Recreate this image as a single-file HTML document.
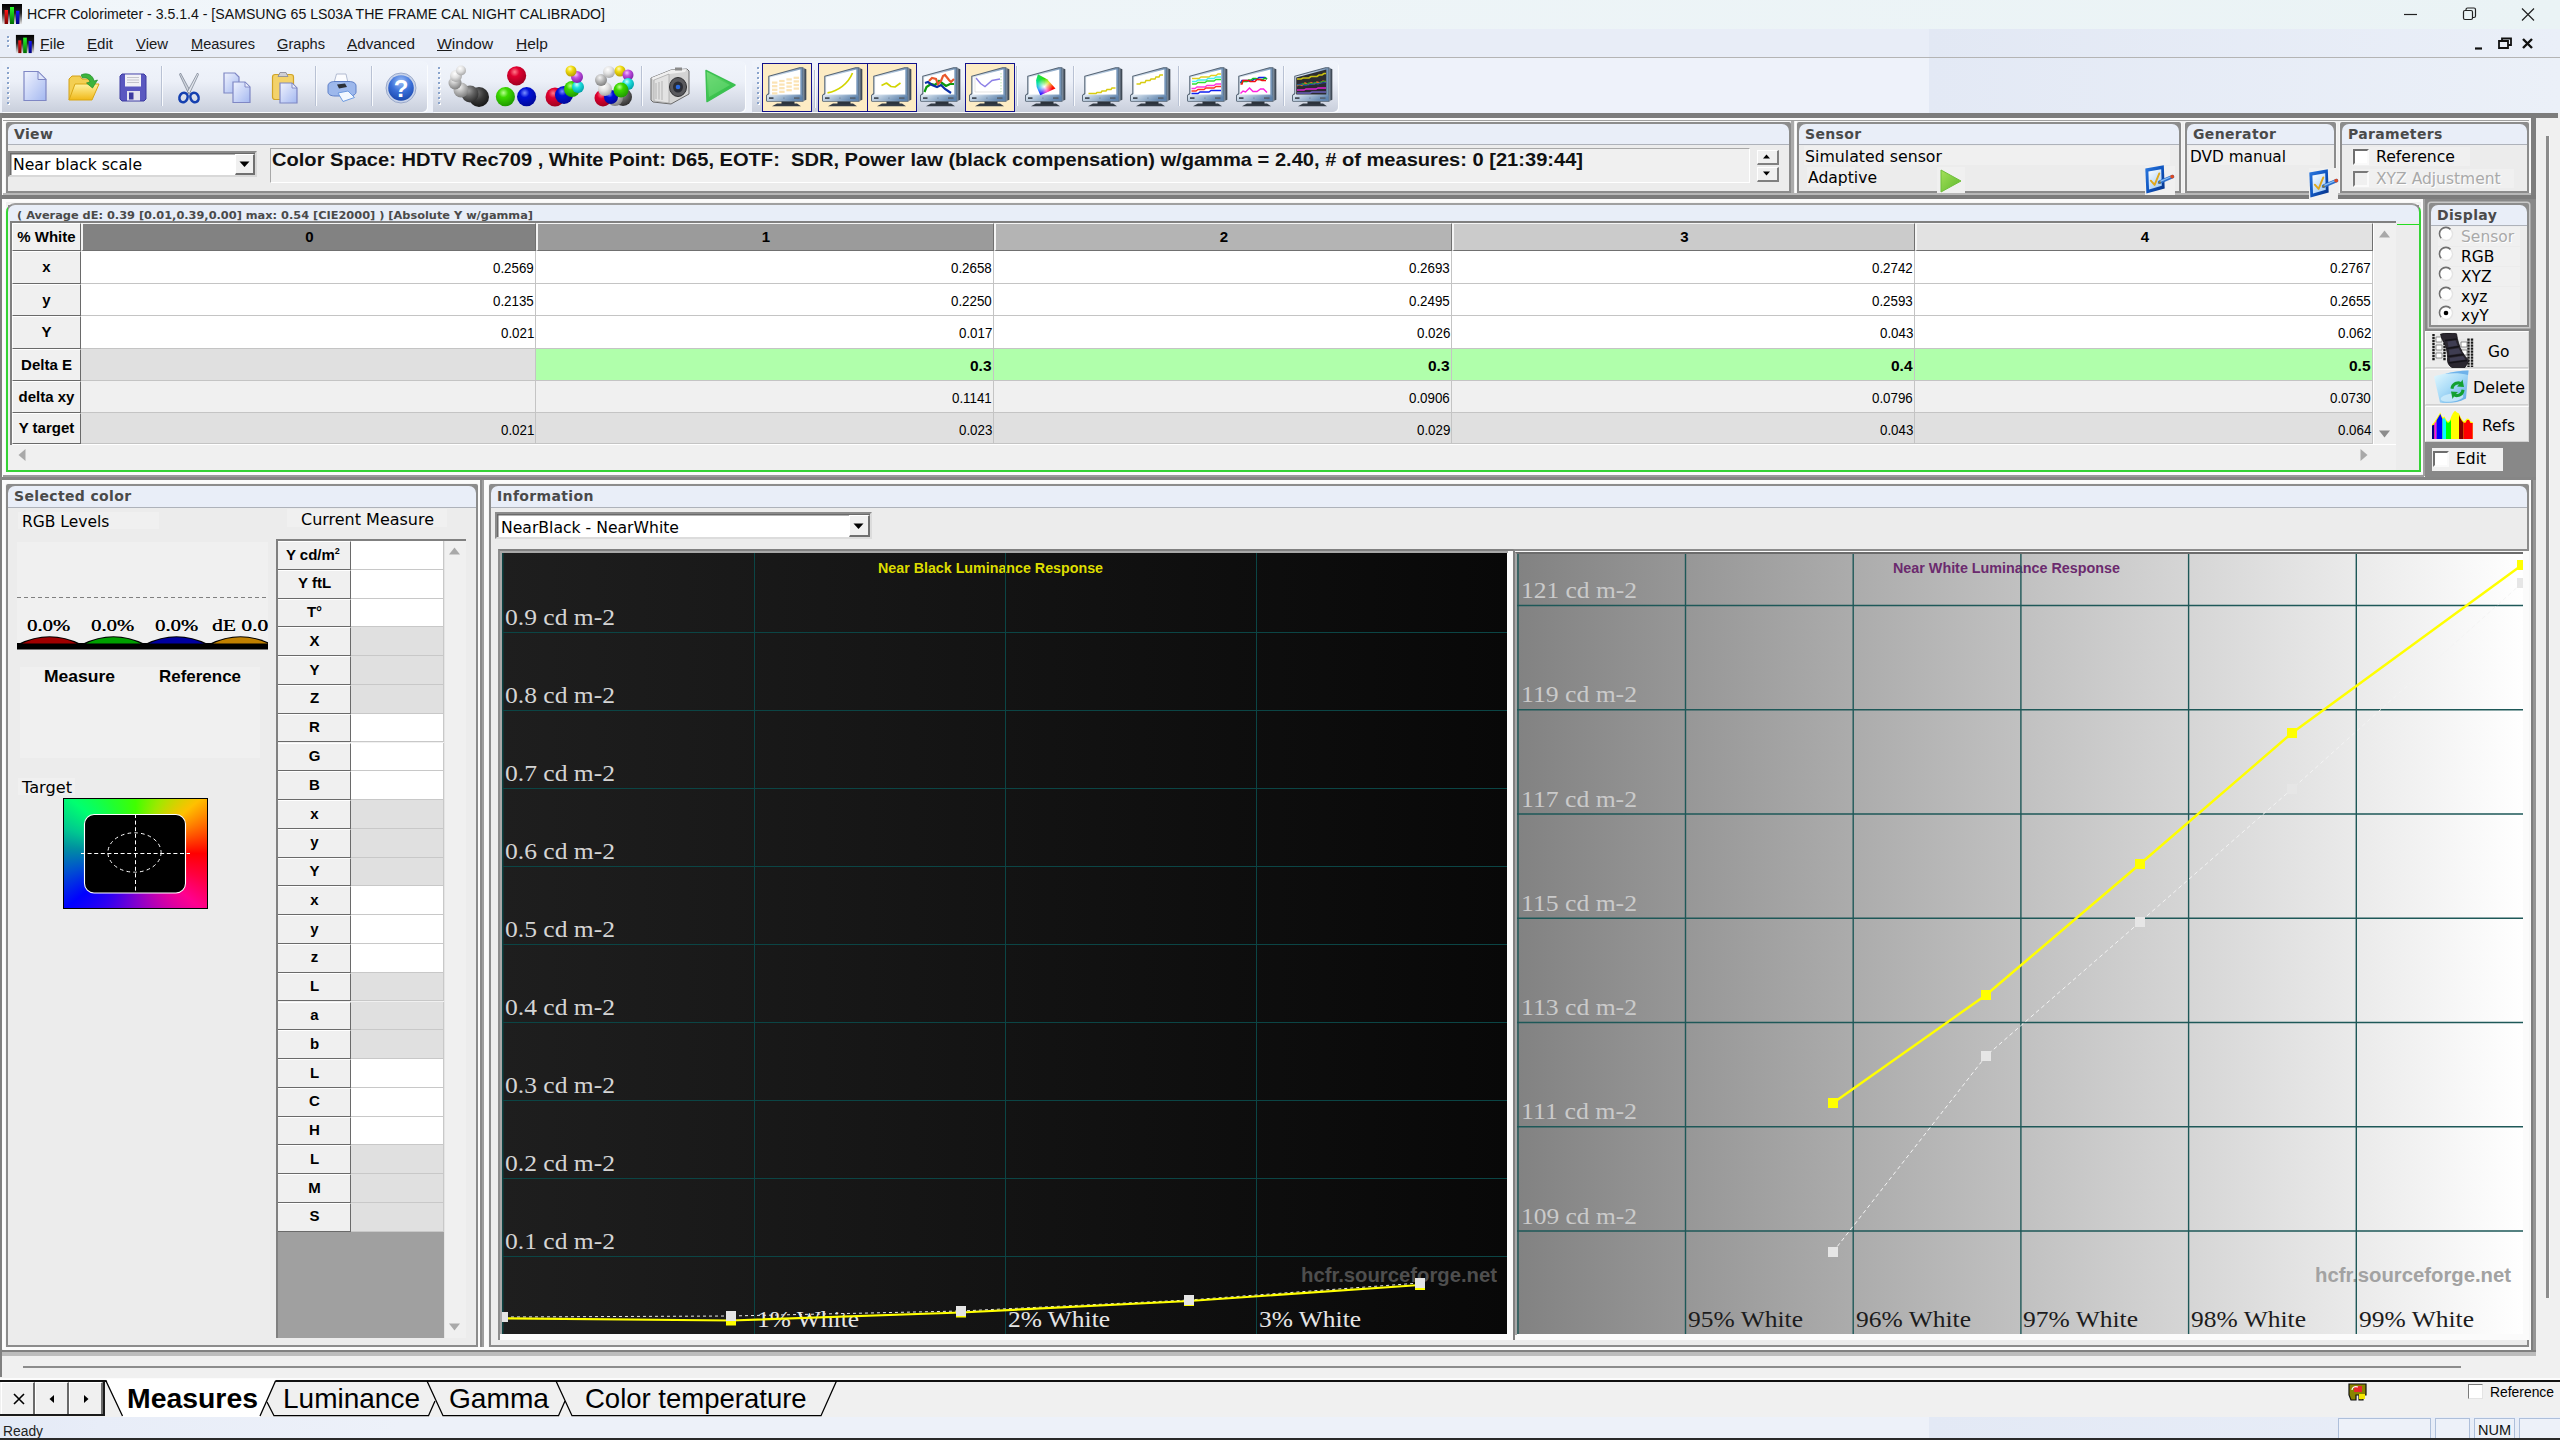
<!DOCTYPE html><html><head><meta charset="utf-8"><title>HCFR Colorimeter</title><style>*{box-sizing:border-box;margin:0;padding:0}
html,body{width:2560px;height:1440px;overflow:hidden;background:#f0f0f0;font-family:"Liberation Sans",sans-serif;}
.a{position:absolute}
.t{position:absolute;white-space:nowrap;line-height:1;color:#000}
.ui{font-family:"DejaVu Sans","Liberation Sans",sans-serif}
.seg{font-family:"Liberation Sans",sans-serif}
.cond{font-family:"DejaVu Sans Condensed","Liberation Sans",sans-serif}
.ser{font-family:"Liberation Serif",serif}
.mn::first-letter{text-decoration:underline}
.gb{position:absolute;border:2px solid #8c8c8c;border-radius:2px 2px 0 0;background:#f0f0f0;box-shadow:0 0 0 1px #f6f6f6}
.gb .cn{position:absolute;left:0;top:0;right:0;height:8px;background:#8c8c8c}
.gb .hd{position:absolute;left:0;top:0;right:0;height:21px;background:#e9eef8;border-bottom:1px solid #aeb2ba;border-radius:7px 7px 0 0}
.gb .hd span{position:absolute;left:6px;top:2px;font:bold 14px "DejaVu Sans",sans-serif;color:#4a4a4a;white-space:nowrap;line-height:17px;letter-spacing:0.35px}
</style></head><body>
<!-- sec_top -->
<div class="a" style="left:0px;top:0px;width:2560px;height:29px;background:linear-gradient(90deg,#f1f6fa,#eaf3f5)"></div>
<svg class="a" style="left:1px;top:3px" width="22" height="22" viewBox="0 0 22 22"><defs><linearGradient id="ig" x1="0" y1="0" x2="0" y2="1"><stop offset="0" stop-color="#000"/><stop offset="0.45" stop-color="#222"/><stop offset="1" stop-color="#e8e8e8"/></linearGradient><linearGradient id="igr" x1="0" y1="0" x2="0" y2="1"><stop offset="0" stop-color="#ff1818"/><stop offset="1" stop-color="#7a0000"/></linearGradient><linearGradient id="igg" x1="0" y1="0" x2="0" y2="1"><stop offset="0" stop-color="#28ff28"/><stop offset="1" stop-color="#006a00"/></linearGradient><linearGradient id="igb" x1="0" y1="0" x2="0" y2="1"><stop offset="0" stop-color="#1818ff"/><stop offset="1" stop-color="#00007a"/></linearGradient></defs><rect x="1" y="1" width="20" height="20" fill="url(#ig)"/><rect x="3.6" y="7" width="3.4" height="14" fill="url(#igr)"/><rect x="9" y="4" width="4" height="17" fill="url(#igg)"/><rect x="15" y="7.8" width="3.4" height="13.2" fill="url(#igb)"/></svg>
<div class="t" style="left:27.0px;top:6px;font-size:15.5px;font-family:'Liberation Sans',sans-serif;transform:scaleX(0.9109);transform-origin:0 0;color:#111">HCFR Colorimeter - 3.5.1.4 - [SAMSUNG 65 LS03A THE FRAME CAL NIGHT CALIBRADO]</div>
<svg class="a" style="left:2390px;top:0" width="170" height="29" viewBox="0 0 170 29"><g stroke="#222" stroke-width="1.2" fill="none"><path d="M14 14.5H27"/><rect x="73.5" y="10.5" width="9" height="9" rx="1.5"/><path d="M76 10.5V9.5a1.5 1.5 0 0 1 1.5-1.5H84a1.5 1.5 0 0 1 1.5 1.5V16a1.5 1.5 0 0 1-1.5 1.5H82.5"/><path d="M132 8.5L144 20.5M144 8.5L132 20.5"/></g></svg>
<div class="a" style="left:0px;top:29px;width:2560px;height:28px;background:#e8edf7"></div>
<div class="a" style="left:1929px;top:29px;width:631px;height:28px;background:linear-gradient(90deg,#e2e8f4,#eaeff8)"></div>
<div class="a" style="left:0px;top:57px;width:2560px;height:1px;background:#b4b4b4"></div>
<div class="a" style="left:7px;top:35.7px;width:2px;height:2px;background:#8aa4cc;box-shadow:1px 1px 0 #fff"></div>
<div class="a" style="left:7px;top:40.4px;width:2px;height:2px;background:#8aa4cc;box-shadow:1px 1px 0 #fff"></div>
<div class="a" style="left:7px;top:45.1px;width:2px;height:2px;background:#8aa4cc;box-shadow:1px 1px 0 #fff"></div>
<svg class="a" style="left:15px;top:34px" width="20" height="20" viewBox="0 0 22 22"><rect x="1" y="1" width="20" height="20" fill="url(#ig)"/><rect x="3.6" y="7" width="3.4" height="14" fill="url(#igr)"/><rect x="9" y="4" width="4" height="17" fill="url(#igg)"/><rect x="15" y="7.8" width="3.4" height="13.2" fill="url(#igb)"/></svg>
<div class="t mn" style="left:40.0px;top:36px;font-size:15.5px;font-family:'Liberation Sans',sans-serif;color:#1a1a1a">File</div>
<div class="t mn" style="left:87.0px;top:36px;font-size:15.5px;font-family:'Liberation Sans',sans-serif;transform:scaleX(0.9735);transform-origin:0 0;color:#1a1a1a">Edit</div>
<div class="t mn" style="left:136.0px;top:36px;font-size:15.5px;font-family:'Liberation Sans',sans-serif;transform:scaleX(0.9605);transform-origin:0 0;color:#1a1a1a">View</div>
<div class="t mn" style="left:191.0px;top:36px;font-size:15.5px;font-family:'Liberation Sans',sans-serif;transform:scaleX(0.9404);transform-origin:0 0;color:#1a1a1a">Measures</div>
<div class="t mn" style="left:277.0px;top:36px;font-size:15.5px;font-family:'Liberation Sans',sans-serif;transform:scaleX(0.9443);transform-origin:0 0;color:#1a1a1a">Graphs</div>
<div class="t mn" style="left:347.0px;top:36px;font-size:15.5px;font-family:'Liberation Sans',sans-serif;transform:scaleX(0.9864);transform-origin:0 0;color:#1a1a1a">Advanced</div>
<div class="t mn" style="left:437.0px;top:36px;font-size:15.5px;font-family:'Liberation Sans',sans-serif;transform:scaleX(1.0158);transform-origin:0 0;color:#1a1a1a">Window</div>
<div class="t mn" style="left:516.0px;top:36px;font-size:15.5px;font-family:'Liberation Sans',sans-serif;color:#1a1a1a">Help</div>
<svg class="a" style="left:2465px;top:33px" width="80" height="22" viewBox="0 0 80 22"><g stroke="#111" stroke-width="2.2" fill="none"><path d="M10 15.5H17"/><path d="M34 8H43V15H34zM37 8V5.5H46V12H43" stroke-width="1.8"/><path d="M58 6L67 15M67 6L58 15" stroke-width="2.4"/></g></svg>
<div class="a" style="left:0px;top:58px;width:2560px;height:55px;background:#eef2fa"></div>
<div class="a" style="left:1929px;top:58px;width:631px;height:55px;background:linear-gradient(90deg,#e3e9f5,#ebf0f8)"></div>
<!-- sec_toolbar -->
<svg class="a" width="0" height="0" style="left:0;top:0"><defs>
<linearGradient id="mb" x1="0" y1="0" x2="1" y2="0"><stop offset="0" stop-color="#e9f0f7"/><stop offset="0.55" stop-color="#b7cbe0"/><stop offset="1" stop-color="#6e8fb4"/></linearGradient>
<linearGradient id="mch" x1="0" y1="0" x2="1" y2="0.3"><stop offset="0" stop-color="#dfe8f1"/><stop offset="0.5" stop-color="#9fb7d0"/><stop offset="1" stop-color="#5e83ad"/></linearGradient>
<linearGradient id="ms" x1="0" y1="0" x2="1" y2="0"><stop offset="0" stop-color="#8494a6"/><stop offset="1" stop-color="#2b333d"/></linearGradient>
<linearGradient id="pgr" x1="0" y1="0" x2="1" y2="1"><stop offset="0" stop-color="#f0f3fe"/><stop offset="1" stop-color="#a4b8f0"/></linearGradient>
<linearGradient id="fol" x1="0" y1="0" x2="0" y2="1"><stop offset="0" stop-color="#fff3a0"/><stop offset="1" stop-color="#f0b818"/></linearGradient>
<radialGradient id="bR" cx="0.4" cy="0.3" r="0.7"><stop offset="0" stop-color="#ff7a8a"/><stop offset="0.35" stop-color="#e00030"/><stop offset="1" stop-color="#a00020"/></radialGradient>
<radialGradient id="bG" cx="0.4" cy="0.3" r="0.7"><stop offset="0" stop-color="#b8ff90"/><stop offset="0.35" stop-color="#3cd800"/><stop offset="1" stop-color="#1f9a00"/></radialGradient>
<radialGradient id="bB" cx="0.4" cy="0.3" r="0.7"><stop offset="0" stop-color="#7a90ff"/><stop offset="0.35" stop-color="#0010d8"/><stop offset="1" stop-color="#00089a"/></radialGradient>
<radialGradient id="bY" cx="0.4" cy="0.3" r="0.7"><stop offset="0" stop-color="#fffcc0"/><stop offset="0.4" stop-color="#f0dc10"/><stop offset="1" stop-color="#b8a000"/></radialGradient>
<radialGradient id="bM" cx="0.4" cy="0.3" r="0.7"><stop offset="0" stop-color="#f4c8ff"/><stop offset="0.4" stop-color="#c050e0"/><stop offset="1" stop-color="#8020a8"/></radialGradient>
<radialGradient id="bC" cx="0.4" cy="0.3" r="0.7"><stop offset="0" stop-color="#d0ffff"/><stop offset="0.4" stop-color="#20e0e0"/><stop offset="1" stop-color="#00a0a8"/></radialGradient>
<radialGradient id="bW" cx="0.4" cy="0.3" r="0.7"><stop offset="0" stop-color="#ffffff"/><stop offset="0.5" stop-color="#e0e0e0"/><stop offset="1" stop-color="#a8a8a8"/></radialGradient>
<radialGradient id="bL" cx="0.4" cy="0.3" r="0.7"><stop offset="0" stop-color="#f4f4f4"/><stop offset="0.5" stop-color="#b8b8b8"/><stop offset="1" stop-color="#808080"/></radialGradient>
<radialGradient id="bD" cx="0.4" cy="0.3" r="0.7"><stop offset="0" stop-color="#a0a0a0"/><stop offset="0.5" stop-color="#606060"/><stop offset="1" stop-color="#303030"/></radialGradient>
<radialGradient id="bK" cx="0.4" cy="0.3" r="0.7"><stop offset="0" stop-color="#707070"/><stop offset="0.5" stop-color="#383838"/><stop offset="1" stop-color="#181818"/></radialGradient>
<radialGradient id="hlp" cx="0.5" cy="0.25" r="0.8"><stop offset="0" stop-color="#9ec0f8"/><stop offset="0.5" stop-color="#3a6fd8"/><stop offset="1" stop-color="#1844a8"/></radialGradient>
<linearGradient id="play" x1="0" y1="0" x2="0.6" y2="1"><stop offset="0" stop-color="#7be07a"/><stop offset="1" stop-color="#22b83c"/></linearGradient>
<linearGradient id="gam" x1="0" y1="0" x2="0" y2="1"><stop offset="0" stop-color="#20e000"/><stop offset="0.5" stop-color="#30e8d8"/><stop offset="1" stop-color="#1010ff"/></linearGradient>
<linearGradient id="gam2" x1="0" y1="0" x2="1" y2="0"><stop offset="0" stop-color="#fff" stop-opacity="0"/><stop offset="0.45" stop-color="#fff" stop-opacity="0.85"/><stop offset="0.7" stop-color="#ff40a0" stop-opacity="0.9"/><stop offset="1" stop-color="#ff0000"/></linearGradient>
</defs></svg>
<div class="a" style="left:2px;top:61px;width:425px;height:51px;background:linear-gradient(#f0f4fb 0%,#ecf0f8 40%,#dadfea 72%,#c9cfdc 100%);border-radius:0 5px 5px 0;box-shadow:1px 1px 0 #fafcfe"></div>
<div class="a" style="left:7px;top:66.6px;width:2px;height:2px;background:#8aa4cc;box-shadow:1px 1px 0 #fff"></div>
<div class="a" style="left:7px;top:71.6px;width:2px;height:2px;background:#8aa4cc;box-shadow:1px 1px 0 #fff"></div>
<div class="a" style="left:7px;top:76.6px;width:2px;height:2px;background:#8aa4cc;box-shadow:1px 1px 0 #fff"></div>
<div class="a" style="left:7px;top:81.6px;width:2px;height:2px;background:#8aa4cc;box-shadow:1px 1px 0 #fff"></div>
<div class="a" style="left:7px;top:86.6px;width:2px;height:2px;background:#8aa4cc;box-shadow:1px 1px 0 #fff"></div>
<div class="a" style="left:7px;top:91.6px;width:2px;height:2px;background:#8aa4cc;box-shadow:1px 1px 0 #fff"></div>
<div class="a" style="left:7px;top:96.6px;width:2px;height:2px;background:#8aa4cc;box-shadow:1px 1px 0 #fff"></div>
<div class="a" style="left:7px;top:101.6px;width:2px;height:2px;background:#8aa4cc;box-shadow:1px 1px 0 #fff"></div>
<div class="a" style="left:433px;top:61px;width:312px;height:51px;background:linear-gradient(#f0f4fb 0%,#ecf0f8 40%,#dadfea 72%,#c9cfdc 100%);border-radius:0 5px 5px 0;box-shadow:1px 1px 0 #fafcfe"></div>
<div class="a" style="left:438px;top:66.6px;width:2px;height:2px;background:#8aa4cc;box-shadow:1px 1px 0 #fff"></div>
<div class="a" style="left:438px;top:71.6px;width:2px;height:2px;background:#8aa4cc;box-shadow:1px 1px 0 #fff"></div>
<div class="a" style="left:438px;top:76.6px;width:2px;height:2px;background:#8aa4cc;box-shadow:1px 1px 0 #fff"></div>
<div class="a" style="left:438px;top:81.6px;width:2px;height:2px;background:#8aa4cc;box-shadow:1px 1px 0 #fff"></div>
<div class="a" style="left:438px;top:86.6px;width:2px;height:2px;background:#8aa4cc;box-shadow:1px 1px 0 #fff"></div>
<div class="a" style="left:438px;top:91.6px;width:2px;height:2px;background:#8aa4cc;box-shadow:1px 1px 0 #fff"></div>
<div class="a" style="left:438px;top:96.6px;width:2px;height:2px;background:#8aa4cc;box-shadow:1px 1px 0 #fff"></div>
<div class="a" style="left:438px;top:101.6px;width:2px;height:2px;background:#8aa4cc;box-shadow:1px 1px 0 #fff"></div>
<div class="a" style="left:752px;top:61px;width:586px;height:51px;background:linear-gradient(#f0f4fb 0%,#ecf0f8 40%,#dadfea 72%,#c9cfdc 100%);border-radius:0 5px 5px 0;box-shadow:1px 1px 0 #fafcfe"></div>
<div class="a" style="left:757px;top:66.6px;width:2px;height:2px;background:#8aa4cc;box-shadow:1px 1px 0 #fff"></div>
<div class="a" style="left:757px;top:71.6px;width:2px;height:2px;background:#8aa4cc;box-shadow:1px 1px 0 #fff"></div>
<div class="a" style="left:757px;top:76.6px;width:2px;height:2px;background:#8aa4cc;box-shadow:1px 1px 0 #fff"></div>
<div class="a" style="left:757px;top:81.6px;width:2px;height:2px;background:#8aa4cc;box-shadow:1px 1px 0 #fff"></div>
<div class="a" style="left:757px;top:86.6px;width:2px;height:2px;background:#8aa4cc;box-shadow:1px 1px 0 #fff"></div>
<div class="a" style="left:757px;top:91.6px;width:2px;height:2px;background:#8aa4cc;box-shadow:1px 1px 0 #fff"></div>
<div class="a" style="left:757px;top:96.6px;width:2px;height:2px;background:#8aa4cc;box-shadow:1px 1px 0 #fff"></div>
<div class="a" style="left:757px;top:101.6px;width:2px;height:2px;background:#8aa4cc;box-shadow:1px 1px 0 #fff"></div>
<svg class="a" style="left:22px;top:70px" width="26" height="32" viewBox="0 0 26 32"><path d="M2 1.5H16L24 9.5V30.5H2Z" fill="url(#pgr)" stroke="#7f87c4" stroke-width="1.2"/><path d="M16 1.5V9.5H24Z" fill="#dfe6fa" stroke="#7f87c4" stroke-width="1"/></svg>
<svg class="a" style="left:67px;top:72px" width="34" height="30" viewBox="0 0 34 30"><path d="M2 28V7L5 4H13L15 7H25V12" fill="#f3cf52" stroke="#d2a018" stroke-width="1"/><path d="M2 28L8 12H32L25 28Z" fill="url(#fol)" stroke="#d9a614" stroke-width="1"/><path d="M14 3C20 0 26 3 27 9L30.5 8L25.5 16L19.5 11L23 10C22 6.5 19 5 15.5 6Z" fill="#3cb43c" stroke="#1e8c28" stroke-width="0.7"/></svg>
<svg class="a" style="left:119px;top:73px" width="28" height="29" viewBox="0 0 28 29"><path d="M1 3L3 1H25L27 3V26L25 28H3L1 26Z" fill="#5a58c0" stroke="#3c3aa0" stroke-width="1"/><rect x="6" y="1.5" width="16" height="12" fill="#f2f2f6"/><path d="M8 4.5H20M8 7H20M8 9.5H20" stroke="#c4c4cc" stroke-width="1"/><rect x="8" y="18" width="13" height="9.5" fill="#e4e4ee"/><rect x="10" y="19.5" width="4.5" height="7" fill="#3c3aa0"/></svg>
<div class="a" style="left:161px;top:66px;width:1px;height:40px;background:#b9c2d4"></div>
<div class="a" style="left:162px;top:66px;width:1px;height:40px;background:#f8fafd"></div>
<svg class="a" style="left:177px;top:72px" width="24" height="32" viewBox="0 0 24 32"><path d="M3.5 1L13.5 19.5L11.5 21.5L2.5 2.5Z" fill="#cfd4dc" stroke="#7d8796" stroke-width="0.8"/><path d="M20.5 1L10.5 19.5L12.5 21.5L21.5 2.5Z" fill="#e2e6ec" stroke="#7d8796" stroke-width="0.8"/><ellipse cx="6.5" cy="25.5" rx="4" ry="4.8" transform="rotate(25 6.5 25.5)" fill="none" stroke="#1540b0" stroke-width="2.6"/><ellipse cx="17.5" cy="25.5" rx="4" ry="4.8" transform="rotate(-25 17.5 25.5)" fill="none" stroke="#1540b0" stroke-width="2.6"/></svg>
<svg class="a" style="left:222px;top:71px" width="30" height="33" viewBox="0 0 30 33"><path d="M2 2H13L17 6V22H2Z" fill="url(#pgr)" stroke="#7f87c4" stroke-width="1.2"/><path d="M11 11H23L28 16V31.5H11Z" fill="url(#pgr)" stroke="#7f87c4" stroke-width="1.2"/><path d="M23 11V16H28Z" fill="#e6ebfa" stroke="#7f87c4" stroke-width="0.9"/></svg>
<svg class="a" style="left:271px;top:71px" width="28" height="33" viewBox="0 0 28 33"><rect x="1.5" y="3.5" width="21" height="25" rx="2.5" fill="#f3d26a" stroke="#d0a428" stroke-width="1.2"/><path d="M7 5.5L9 1.5H15L17 5.5Z" fill="#cfcfd4" stroke="#8e8e98" stroke-width="0.9"/><path d="M9 12H21L26 17V32H9Z" fill="url(#pgr)" stroke="#7f87c4" stroke-width="1.2"/><path d="M21 12V17H26Z" fill="#e6ebfa" stroke="#7f87c4" stroke-width="0.9"/></svg>
<div class="a" style="left:315px;top:66px;width:1px;height:40px;background:#b9c2d4"></div>
<div class="a" style="left:316px;top:66px;width:1px;height:40px;background:#f8fafd"></div>
<svg class="a" style="left:326px;top:72px" width="32" height="31" viewBox="0 0 32 31"><path d="M8 11L10.5 2H20L22 11Z" fill="#fbfcff" stroke="#aab4cc" stroke-width="0.9"/><path d="M2 14C2 11 5 9.5 9 9.5H23C27 9.5 30 11 30 14V20C30 22.5 27 24 23 24H9C5 24 2 22.5 2 20Z" fill="#9db8ec" stroke="#5f80c8" stroke-width="1"/><path d="M11 12.5L19 11.5L21 15L13 16.5Z" fill="#2c3038"/><path d="M12 21L22 19L28.5 25.5L17 29.5Z" fill="#f2f8ff" stroke="#6e9be0" stroke-width="1"/></svg>
<div class="a" style="left:371px;top:66px;width:1px;height:40px;background:#b9c2d4"></div>
<div class="a" style="left:372px;top:66px;width:1px;height:40px;background:#f8fafd"></div>
<svg class="a" style="left:385px;top:72px" width="32" height="32" viewBox="0 0 32 32"><circle cx="16" cy="16" r="15" fill="#c9d4ea" stroke="#8c9cc0" stroke-width="0.8"/><circle cx="16" cy="16" r="12.8" fill="url(#hlp)"/><text x="16" y="25" text-anchor="middle" font-family="Liberation Sans,sans-serif" font-weight="bold" font-size="24" fill="#fff">?</text></svg>
<svg class="a" style="left:446px;top:65px" width="44" height="44" viewBox="0 0 44 44"><circle cx="33" cy="32" r="10" fill="url(#bK)"/><circle cx="24" cy="29" r="8.5" fill="url(#bD)"/><circle cx="15" cy="25" r="7.5" fill="url(#bL)"/><circle cx="9" cy="18" r="6.5" fill="url(#bL)"/><circle cx="10" cy="11" r="6" fill="url(#bW)"/><circle cx="15" cy="5.5" r="5" fill="url(#bW)"/></svg>
<svg class="a" style="left:494px;top:65px" width="44" height="44" viewBox="0 0 44 44"><circle cx="22.6" cy="10.8" r="9.6" fill="url(#bR)"/><circle cx="11.4" cy="31.7" r="9.6" fill="url(#bG)"/><circle cx="32.6" cy="31.7" r="9.6" fill="url(#bB)"/></svg>
<svg class="a" style="left:544px;top:65px" width="44" height="44" viewBox="0 0 44 44"><circle cx="11" cy="32" r="9.5" fill="url(#bR)"/><circle cx="20" cy="30" r="9" fill="url(#bB)"/><circle cx="28" cy="24" r="8" fill="url(#bG)"/><circle cx="34" cy="22" r="6" fill="url(#bC)"/><circle cx="33" cy="12" r="6" fill="url(#bM)"/><circle cx="27" cy="6" r="5.5" fill="url(#bY)"/></svg>
<svg class="a" style="left:592px;top:65px" width="44" height="44" viewBox="0 0 44 44"><circle cx="31" cy="32" r="9" fill="url(#bD)"/><circle cx="23" cy="33" r="8" fill="url(#bL)"/><circle cx="11" cy="33" r="8.5" fill="url(#bR)"/><circle cx="19" cy="32" r="7" fill="url(#bB)"/><circle cx="13" cy="24" r="7" fill="url(#bW)"/><circle cx="9" cy="15" r="6" fill="url(#bL)"/><circle cx="17" cy="7" r="6" fill="url(#bW)"/><circle cx="28" cy="6" r="5.5" fill="url(#bY)"/><circle cx="36" cy="10" r="5.5" fill="url(#bM)"/><circle cx="36" cy="19" r="6" fill="url(#bC)"/><circle cx="29" cy="25" r="7.5" fill="url(#bG)"/></svg>
<div class="a" style="left:641px;top:66px;width:1px;height:40px;background:#b9c2d4"></div>
<div class="a" style="left:642px;top:66px;width:1px;height:40px;background:#f8fafd"></div>
<svg class="a" style="left:649px;top:66px" width="42" height="41" viewBox="0 0 42 41"><path d="M2 12L22 4L38 3L40 5V28L22 38L4 36L2 34Z" fill="#d4d4d4" stroke="#6a6a6a" stroke-width="1"/><path d="M2 12L22 4L38 3L36 6L20 8L5 14Z" fill="#f0f0f0"/><path d="M5 14L20 8V37L5 35Z" fill="#e2e2e2" stroke="#9a9a9a" stroke-width="0.6"/><path d="M7 17V33M10 16V33.5M13 15V34" stroke="#b4b4b4" stroke-width="1"/><rect x="26" y="1.5" width="7" height="3" fill="#8a8a8a"/><ellipse cx="29" cy="21" rx="8.5" ry="9.5" fill="#5a5a5e" stroke="#2e2e30" stroke-width="1"/><ellipse cx="29" cy="21" rx="5" ry="5.6" fill="#2a2c34"/><circle cx="29" cy="21" r="2.3" fill="#2a6ae0"/></svg>
<svg class="a" style="left:704px;top:69px" width="33" height="34" viewBox="0 0 33 34"><path d="M2 1.5L31 16L3 32.5Z" fill="url(#play)" stroke="#3cc052" stroke-width="1.5" stroke-linejoin="round"/><path d="M4 5L26 16L5 28Z" fill="#6ad876" opacity="0.6"/></svg>
<div class="a" style="left:762px;top:62.5px;width:49.5px;height:49px;background:#fdecc4;border:1.5px solid #12128c"></div>
<div class="a" style="left:818px;top:62.5px;width:49.5px;height:49px;background:#fdecc4;border:1.5px solid #12128c"></div>
<div class="a" style="left:866.5px;top:62.5px;width:50px;height:49px;background:#fdecc4;border:1.5px solid #12128c"></div>
<div class="a" style="left:964.5px;top:62.5px;width:50px;height:49px;background:#fdecc4;border:1.5px solid #12128c"></div>
<div class="a" style="left:814px;top:70px;width:1px;height:38px;background:#b9c2d4"></div>
<div class="a" style="left:815px;top:70px;width:1px;height:38px;background:#f8fafd"></div>
<div class="a" style="left:1016px;top:66px;width:1px;height:40px;background:#b9c2d4"></div>
<div class="a" style="left:1017px;top:66px;width:1px;height:40px;background:#f8fafd"></div>
<div class="a" style="left:1073px;top:66px;width:1px;height:40px;background:#b9c2d4"></div>
<div class="a" style="left:1074px;top:66px;width:1px;height:40px;background:#f8fafd"></div>
<div class="a" style="left:1178px;top:66px;width:1px;height:40px;background:#b9c2d4"></div>
<div class="a" style="left:1179px;top:66px;width:1px;height:40px;background:#f8fafd"></div>
<div class="a" style="left:1283px;top:66px;width:1px;height:40px;background:#b9c2d4"></div>
<div class="a" style="left:1284px;top:66px;width:1px;height:40px;background:#f8fafd"></div>
<svg class="a" style="left:766px;top:66.7px" width="41" height="40" viewBox="0 0 41 40"><path d="M6 39.3H35L31 36.6H11Z" fill="#353d47"/><path d="M15.5 34H28.5V37.3H15.5Z" fill="#2c343d"/><path d="M2.8 9.2L33.5 0.8L37 0.8V34.3H1.2L0.6 33.5V28.5L2.8 26.5Z" fill="url(#mb)" stroke="#566575" stroke-width="1.1" stroke-linejoin="round"/><path d="M37 0.8L40.3 2.3V32.8L37 34.3Z" fill="url(#ms)"/><path d="M1.2 28.3H36.5V33.8H1.2Z" fill="url(#mch)"/><path d="M4.2 10.6L34.3 2.6V27.6H4.2Z" fill="#fff"/><rect x="3" y="30.3" width="4.5" height="1.6" fill="#3a424c"/><rect x="28" y="30.3" width="5.5" height="1.6" fill="#56616e"/><rect x="17" y="30.6" width="1.8" height="1" fill="#7a8ea4"/><rect x="6.0" y="14.5" width="5.4" height="2.2" fill="#fbe3b4"/><rect x="13.2" y="12.9" width="5.4" height="2.2" fill="#fbe3b4"/><rect x="20.4" y="11.3" width="5.4" height="2.2" fill="#fbe3b4"/><rect x="27.6" y="9.7" width="5.4" height="2.2" fill="#fbe3b4"/><rect x="6.0" y="18.1" width="5.4" height="2.2" fill="#fbe3b4"/><rect x="13.2" y="16.5" width="5.4" height="2.2" fill="#fbe3b4"/><rect x="20.4" y="14.9" width="5.4" height="2.2" fill="#fbe3b4"/><rect x="27.6" y="13.3" width="5.4" height="2.2" fill="#fbe3b4"/><rect x="6.0" y="21.7" width="5.4" height="2.2" fill="#fbe3b4"/><rect x="13.2" y="20.1" width="5.4" height="2.2" fill="#fbe3b4"/><rect x="20.4" y="18.5" width="5.4" height="2.2" fill="#fbe3b4"/><rect x="27.6" y="16.9" width="5.4" height="2.2" fill="#fbe3b4"/><rect x="6.0" y="25.3" width="5.4" height="2.2" fill="#fbe3b4"/><rect x="13.2" y="23.7" width="5.4" height="2.2" fill="#fbe3b4"/><rect x="20.4" y="22.1" width="5.4" height="2.2" fill="#fbe3b4"/><rect x="27.6" y="20.5" width="5.4" height="2.2" fill="#fbe3b4"/></svg>
<svg class="a" style="left:822px;top:66.7px" width="41" height="40" viewBox="0 0 41 40"><path d="M6 39.3H35L31 36.6H11Z" fill="#353d47"/><path d="M15.5 34H28.5V37.3H15.5Z" fill="#2c343d"/><path d="M2.8 9.2L33.5 0.8L37 0.8V34.3H1.2L0.6 33.5V28.5L2.8 26.5Z" fill="url(#mb)" stroke="#566575" stroke-width="1.1" stroke-linejoin="round"/><path d="M37 0.8L40.3 2.3V32.8L37 34.3Z" fill="url(#ms)"/><path d="M1.2 28.3H36.5V33.8H1.2Z" fill="url(#mch)"/><path d="M4.2 10.6L34.3 2.6V27.6H4.2Z" fill="#fff"/><rect x="3" y="30.3" width="4.5" height="1.6" fill="#3a424c"/><rect x="28" y="30.3" width="5.5" height="1.6" fill="#56616e"/><rect x="17" y="30.6" width="1.8" height="1" fill="#7a8ea4"/><path d="M5.5 25.8C16 24 26 17 30.5 6" stroke="#d2d400" stroke-width="1.7" fill="none"/></svg>
<svg class="a" style="left:870.5px;top:66.7px" width="41" height="40" viewBox="0 0 41 40"><path d="M6 39.3H35L31 36.6H11Z" fill="#353d47"/><path d="M15.5 34H28.5V37.3H15.5Z" fill="#2c343d"/><path d="M2.8 9.2L33.5 0.8L37 0.8V34.3H1.2L0.6 33.5V28.5L2.8 26.5Z" fill="url(#mb)" stroke="#566575" stroke-width="1.1" stroke-linejoin="round"/><path d="M37 0.8L40.3 2.3V32.8L37 34.3Z" fill="url(#ms)"/><path d="M1.2 28.3H36.5V33.8H1.2Z" fill="url(#mch)"/><path d="M4.2 10.6L34.3 2.6V27.6H4.2Z" fill="#fff"/><rect x="3" y="30.3" width="4.5" height="1.6" fill="#3a424c"/><rect x="28" y="30.3" width="5.5" height="1.6" fill="#56616e"/><rect x="17" y="30.6" width="1.8" height="1" fill="#7a8ea4"/><path d="M10.5 18.5L15.5 16L20 19.5L24 20L29.5 16" stroke="#d2d400" stroke-width="1.6" fill="none" stroke-linejoin="round"/></svg>
<svg class="a" style="left:920px;top:66.7px" width="41" height="40" viewBox="0 0 41 40"><path d="M6 39.3H35L31 36.6H11Z" fill="#353d47"/><path d="M15.5 34H28.5V37.3H15.5Z" fill="#2c343d"/><path d="M2.8 9.2L33.5 0.8L37 0.8V34.3H1.2L0.6 33.5V28.5L2.8 26.5Z" fill="url(#mb)" stroke="#566575" stroke-width="1.1" stroke-linejoin="round"/><path d="M37 0.8L40.3 2.3V32.8L37 34.3Z" fill="url(#ms)"/><path d="M1.2 28.3H36.5V33.8H1.2Z" fill="url(#mch)"/><path d="M4.2 10.6L34.3 2.6V27.6H4.2Z" fill="#fff"/><rect x="3" y="30.3" width="4.5" height="1.6" fill="#3a424c"/><rect x="28" y="30.3" width="5.5" height="1.6" fill="#56616e"/><rect x="17" y="30.6" width="1.8" height="1" fill="#7a8ea4"/><path d="M4.5 25L6.5 20L11 17L15 18L19 14L22 16L26 19L30 17L34 17" stroke="#0c9a0c" stroke-width="2.2" fill="none"/><path d="M5 16L8 15L12 18L17 20L21 18L25 22L31 26" stroke="#0a2fa8" stroke-width="2.2" fill="none"/><path d="M9 14L12 11L16 12L18 17L21 14L23 9L25 8L29 13L31 15L34 12" stroke="#e8582c" stroke-width="2.2" fill="none"/></svg>
<svg class="a" style="left:968.5px;top:66.7px" width="41" height="40" viewBox="0 0 41 40"><path d="M6 39.3H35L31 36.6H11Z" fill="#353d47"/><path d="M15.5 34H28.5V37.3H15.5Z" fill="#2c343d"/><path d="M2.8 9.2L33.5 0.8L37 0.8V34.3H1.2L0.6 33.5V28.5L2.8 26.5Z" fill="url(#mb)" stroke="#566575" stroke-width="1.1" stroke-linejoin="round"/><path d="M37 0.8L40.3 2.3V32.8L37 34.3Z" fill="url(#ms)"/><path d="M1.2 28.3H36.5V33.8H1.2Z" fill="url(#mch)"/><path d="M4.2 10.6L34.3 2.6V27.6H4.2Z" fill="#fff"/><rect x="3" y="30.3" width="4.5" height="1.6" fill="#3a424c"/><rect x="28" y="30.3" width="5.5" height="1.6" fill="#56616e"/><rect x="17" y="30.6" width="1.8" height="1" fill="#7a8ea4"/><path d="M7 11L11.5 16.5L16 19.5L23 13.5L31 12" stroke="#8c7fe6" stroke-width="1.4" fill="none"/><path d="M6 9V25H32" stroke="#d8d8d8" stroke-width="0.7" fill="none"/><path d="M32 6V25" stroke="#a8e0a0" stroke-width="0.8" stroke-dasharray="1.5 1.5"/></svg>
<svg class="a" style="left:1025px;top:66.7px" width="41" height="40" viewBox="0 0 41 40"><path d="M6 39.3H35L31 36.6H11Z" fill="#353d47"/><path d="M15.5 34H28.5V37.3H15.5Z" fill="#2c343d"/><path d="M2.8 9.2L33.5 0.8L37 0.8V34.3H1.2L0.6 33.5V28.5L2.8 26.5Z" fill="url(#mb)" stroke="#566575" stroke-width="1.1" stroke-linejoin="round"/><path d="M37 0.8L40.3 2.3V32.8L37 34.3Z" fill="url(#ms)"/><path d="M1.2 28.3H36.5V33.8H1.2Z" fill="url(#mch)"/><path d="M4.2 10.6L34.3 2.6V27.6H4.2Z" fill="#fff"/><rect x="3" y="30.3" width="4.5" height="1.6" fill="#3a424c"/><rect x="28" y="30.3" width="5.5" height="1.6" fill="#56616e"/><rect x="17" y="30.6" width="1.8" height="1" fill="#7a8ea4"/></svg>
<div class="a" style="left:1035.5px;top:74.2px;width:20px;height:21.5px;clip-path:polygon(12% 0%,3% 28%,6% 60%,24% 98%,100% 66%,58% 24%);background:radial-gradient(circle at 42% 58%,#fff 0,rgba(255,255,255,0.6) 18%,rgba(255,255,255,0) 48%),conic-gradient(from 0deg at 42% 58%,#30e000 0deg,#d8e000 45deg,#ff3000 85deg,#ff0000 105deg,#ff00b0 150deg,#3000ff 200deg,#0090ff 250deg,#00e0a0 300deg,#30e000 360deg)"></div>
<svg class="a" style="left:1081.5px;top:66.7px" width="41" height="40" viewBox="0 0 41 40"><path d="M6 39.3H35L31 36.6H11Z" fill="#353d47"/><path d="M15.5 34H28.5V37.3H15.5Z" fill="#2c343d"/><path d="M2.8 9.2L33.5 0.8L37 0.8V34.3H1.2L0.6 33.5V28.5L2.8 26.5Z" fill="url(#mb)" stroke="#566575" stroke-width="1.1" stroke-linejoin="round"/><path d="M37 0.8L40.3 2.3V32.8L37 34.3Z" fill="url(#ms)"/><path d="M1.2 28.3H36.5V33.8H1.2Z" fill="url(#mch)"/><path d="M4.2 10.6L34.3 2.6V27.6H4.2Z" fill="#fff"/><rect x="3" y="30.3" width="4.5" height="1.6" fill="#3a424c"/><rect x="28" y="30.3" width="5.5" height="1.6" fill="#56616e"/><rect x="17" y="30.6" width="1.8" height="1" fill="#7a8ea4"/><path d="M6.5 26.5H14L15 25.5H19L20 24H24L25 22.5H29L30 21H33.5" stroke="#d8cc10" stroke-width="1.5" fill="none"/></svg>
<svg class="a" style="left:1130px;top:66.7px" width="41" height="40" viewBox="0 0 41 40"><path d="M6 39.3H35L31 36.6H11Z" fill="#353d47"/><path d="M15.5 34H28.5V37.3H15.5Z" fill="#2c343d"/><path d="M2.8 9.2L33.5 0.8L37 0.8V34.3H1.2L0.6 33.5V28.5L2.8 26.5Z" fill="url(#mb)" stroke="#566575" stroke-width="1.1" stroke-linejoin="round"/><path d="M37 0.8L40.3 2.3V32.8L37 34.3Z" fill="url(#ms)"/><path d="M1.2 28.3H36.5V33.8H1.2Z" fill="url(#mch)"/><path d="M4.2 10.6L34.3 2.6V27.6H4.2Z" fill="#fff"/><rect x="3" y="30.3" width="4.5" height="1.6" fill="#3a424c"/><rect x="28" y="30.3" width="5.5" height="1.6" fill="#56616e"/><rect x="17" y="30.6" width="1.8" height="1" fill="#7a8ea4"/><path d="M6.5 17H10L11 15.5H15L16 13.5H20L21 12H25L26 10H29L30 8H33" stroke="#d8cc10" stroke-width="1.5" fill="none"/></svg>
<svg class="a" style="left:1186.5px;top:66.7px" width="41" height="40" viewBox="0 0 41 40"><path d="M6 39.3H35L31 36.6H11Z" fill="#353d47"/><path d="M15.5 34H28.5V37.3H15.5Z" fill="#2c343d"/><path d="M2.8 9.2L33.5 0.8L37 0.8V34.3H1.2L0.6 33.5V28.5L2.8 26.5Z" fill="url(#mb)" stroke="#566575" stroke-width="1.1" stroke-linejoin="round"/><path d="M37 0.8L40.3 2.3V32.8L37 34.3Z" fill="url(#ms)"/><path d="M1.2 28.3H36.5V33.8H1.2Z" fill="url(#mch)"/><path d="M4.2 10.6L34.3 2.6V27.6H4.2Z" fill="#fff"/><rect x="3" y="30.3" width="4.5" height="1.6" fill="#3a424c"/><rect x="28" y="30.3" width="5.5" height="1.6" fill="#56616e"/><rect x="17" y="30.6" width="1.8" height="1" fill="#7a8ea4"/><path d="M5 11.5H12L14 10H22L24 8.5H29L31 7H34" stroke="#e0d020" stroke-width="1.3" fill="none"/><path d="M5 14.5H9L11 13H19L21 11.5H27L29 10H34" stroke="#40f0f0" stroke-width="1.3" fill="none"/><path d="M5 17H9L11 15.5H18L20 14H27L29 12.5H34" stroke="#30e030" stroke-width="1.3" fill="none"/><path d="M4.5 21.5H8L10 20H18L20 18.5H27L29 17H34" stroke="#ff30e0" stroke-width="1.3" fill="none"/><path d="M4.5 24H9L11 22.5H17L19 21H27L29 19.5H34" stroke="#ff3020" stroke-width="1.3" fill="none"/><path d="M4.5 26.5H11L13 25H22L24 23.5H34" stroke="#1020f0" stroke-width="1.3" fill="none"/></svg>
<svg class="a" style="left:1235.5px;top:66.7px" width="41" height="40" viewBox="0 0 41 40"><path d="M6 39.3H35L31 36.6H11Z" fill="#353d47"/><path d="M15.5 34H28.5V37.3H15.5Z" fill="#2c343d"/><path d="M2.8 9.2L33.5 0.8L37 0.8V34.3H1.2L0.6 33.5V28.5L2.8 26.5Z" fill="url(#mb)" stroke="#566575" stroke-width="1.1" stroke-linejoin="round"/><path d="M37 0.8L40.3 2.3V32.8L37 34.3Z" fill="url(#ms)"/><path d="M1.2 28.3H36.5V33.8H1.2Z" fill="url(#mch)"/><path d="M4.2 10.6L34.3 2.6V27.6H4.2Z" fill="#fff"/><rect x="3" y="30.3" width="4.5" height="1.6" fill="#3a424c"/><rect x="28" y="30.3" width="5.5" height="1.6" fill="#56616e"/><rect x="17" y="30.6" width="1.8" height="1" fill="#7a8ea4"/><path d="M4.5 16L6 13.5H11L12 14H16L18 12H21L23 10.5H29L31 12" stroke="#1020f0" stroke-width="1.5" fill="none"/><path d="M5 16.5L6.5 14.5H11L12.5 13H15L17 11.5H20L22 12.5H27L29 11L31 12" stroke="#10c020" stroke-width="1.5" fill="none"/><path d="M4.5 17H6L7 13.5H13L14 14.5H19L21 12.5H24L26 13.5H30" stroke="#f01010" stroke-width="1.5" fill="none"/><path d="M4.5 26.5L7 24L9.5 25L13.5 21L17 24.5H21L24.5 22H27.5L31 25.5" stroke="#ff20e0" stroke-width="1.4" fill="none"/></svg>
<svg class="a" style="left:1291.5px;top:66.7px" width="41" height="40" viewBox="0 0 41 40"><path d="M6 39.3H35L31 36.6H11Z" fill="#353d47"/><path d="M15.5 34H28.5V37.3H15.5Z" fill="#2c343d"/><path d="M2.8 9.2L33.5 0.8L37 0.8V34.3H1.2L0.6 33.5V28.5L2.8 26.5Z" fill="url(#mb)" stroke="#566575" stroke-width="1.1" stroke-linejoin="round"/><path d="M37 0.8L40.3 2.3V32.8L37 34.3Z" fill="url(#ms)"/><path d="M1.2 28.3H36.5V33.8H1.2Z" fill="url(#mch)"/><path d="M4.2 10.6L34.3 2.6V27.6H4.2Z" fill="#2c2c30"/><rect x="3" y="30.3" width="4.5" height="1.6" fill="#3a424c"/><rect x="28" y="30.3" width="5.5" height="1.6" fill="#56616e"/><rect x="17" y="30.6" width="1.8" height="1" fill="#7a8ea4"/><path d="M5 12H9L11 11H17L19 9.5H25L27 8H30L32 6.5H34" stroke="#c8c010" stroke-width="1.6" fill="none"/><path d="M5 19L7 17.5L10 18.5L13 16L16 17.5L19 15.5L22 17L25 15L28 16L31 14L34 15" stroke="#e06820" stroke-width="1.5" fill="none"/><path d="M5 17.5L8 18L11 16.5L14 18L17 16L20 17L23 15.5L26 17L29 15L34 14" stroke="#20a030" stroke-width="1.2" fill="none"/><path d="M5 18L9 17L12 18.5L34 15.5" stroke="#2040d0" stroke-width="0.8" fill="none"/><path d="M5 23H12L14 22H24L26 21H34" stroke="#e020d0" stroke-width="1.3" fill="none"/><path d="M5 26H18L20 25H34" stroke="#6860b8" stroke-width="1.4" fill="none"/></svg>
<!-- sec_main -->
<div class="a" style="left:0px;top:113px;width:2558px;height:5px;background:#7c7c7c"></div>
<div class="a" style="left:0px;top:118px;width:2536px;height:2px;background:#fbfbfb"></div>
<div class="a" style="left:0px;top:113px;width:2.2px;height:1264px;background:#808080"></div>
<div class="a" style="left:2.2px;top:119px;width:3.8px;height:1230px;background:#fdfdfd"></div>
<div class="a" style="left:2531px;top:118px;width:5px;height:362px;background:#7e7e7e"></div>
<div class="a" style="left:2531px;top:480px;width:5px;height:872px;background:linear-gradient(90deg,#7e7e7e 0 2px,#969696 2px 5px)"></div>
<div class="a" style="left:2529px;top:120px;width:2px;height:1229px;background:#fbfbfb"></div>
<div class="a" style="left:2546px;top:136px;width:2.6px;height:1162px;background:#8c8c8c;box-shadow:1px 0 0 #fafafa"></div>
<div class="a" style="left:3px;top:119.5px;width:2526px;height:1.5px;background:#a0a0a0"></div>
<div class="gb" style="left:6px;top:122px;width:1785px;height:71px;background:#ececec;"><div class="cn"></div><div class="hd" style="height:21px"><span>View</span></div></div>
<div class="a" style="left:1791px;top:121px;width:3px;height:73px;background:#ababab"></div>
<div class="a" style="left:8px;top:151px;width:249px;height:26px;background:#fff;border:2px solid #8a8a8a;border-right-color:#d8d8d8;border-bottom-color:#d8d8d8;box-shadow:inset 1.5px 1.5px 0 #6a6a6a"></div>
<div class="a" style="left:235px;top:154px;width:20px;height:21px;background:#f0f0f0;border:1px solid #fff;border-right:2px solid #707070;border-bottom:2px solid #707070"></div>
<svg class="a" style="left:239px;top:161px" width="11" height="7"><path d="M0.5 0.5H10.5L5.5 6Z" fill="#000"/></svg>
<div class="t" style="left:13.0px;top:158px;font-size:15px;font-family:'DejaVu Sans',sans-serif;transform:scaleX(1.0419);transform-origin:0 0;">Near black scale</div>
<div class="a" style="left:270px;top:148px;width:1480px;height:35px;background:#f0f0f0;border-top:1px solid #a8a8a8;border-left:1px solid #a8a8a8;border-right:1px solid #fff;border-bottom:1px solid #fff"></div>
<div class="t" style="left:272.0px;top:150px;font-size:19px;font-family:'Liberation Sans',sans-serif;font-weight:bold;transform:scaleX(1.0572);transform-origin:0 0;color:#111">Color Space: HDTV Rec709 , White Point: D65, EOTF:&nbsp; SDR, Power law (black compensation) w/gamma = 2.40, # of measures: 0 [21:39:44]</div>
<div class="a" style="left:1757px;top:150px;width:22px;height:15px;background:#f0f0f0;border:1px solid #fff;border-right:2px solid #808080;border-bottom:2px solid #808080"></div>
<svg class="a" style="left:1762px;top:154px" width="9" height="5"><path d="M1 4.5L4.5 0.5L8 4.5Z" fill="#000"/></svg>
<div class="a" style="left:1757px;top:167px;width:22px;height:15px;background:#f0f0f0;border:1px solid #fff;border-right:2px solid #808080;border-bottom:2px solid #808080"></div>
<svg class="a" style="left:1762px;top:171px" width="9" height="5"><path d="M1 0.5H8L4.5 4.5Z" fill="#000"/></svg>
<div class="a" style="left:1795px;top:121px;width:2px;height:74px;background:#fff"></div>
<div class="gb" style="left:1797px;top:122px;width:384px;height:71px;background:#ececec;"><div class="cn"></div><div class="hd" style="height:21px"><span>Sensor</span></div></div>
<div class="a" style="left:1804px;top:146px;width:366px;height:19px;background:#f0f0f0"></div>
<div class="t" style="left:1805.0px;top:150px;font-size:15.5px;font-family:'DejaVu Sans',sans-serif;transform:scaleX(1.0177);transform-origin:0 0;">Simulated sensor</div>
<div class="a" style="left:1807px;top:167px;width:48px;height:20px;background:#f0f0f0"></div>
<div class="t" style="left:1808.0px;top:171px;font-size:15.5px;font-family:'DejaVu Sans',sans-serif;transform:scaleX(1.0058);transform-origin:0 0;">Adaptive</div>
<div class="a" style="left:1937px;top:167px;width:28px;height:28.5px;background:#f0f0f0"></div>
<svg class="a" style="left:1940px;top:169px" width="22" height="24"><defs><linearGradient id="pg" x1="0" y1="0" x2="1" y2="1"><stop offset="0" stop-color="#a4e05a"/><stop offset="1" stop-color="#5cb82c"/></linearGradient></defs><path d="M1 1L21 12L1 23Z" fill="url(#pg)" stroke="#6fbf3a" stroke-width="1"/></svg>
<div class="gb" style="left:2185px;top:122px;width:151px;height:71px;background:#ececec;"><div class="cn"></div><div class="hd" style="height:21px"><span>Generator</span></div></div>
<div class="a" style="left:2189px;top:146px;width:131px;height:19px;background:#f0f0f0"></div>
<div class="t" style="left:2190.0px;top:150px;font-size:15.5px;font-family:'DejaVu Sans',sans-serif;transform:scaleX(0.9879);transform-origin:0 0;">DVD manual</div>
<div class="gb" style="left:2340px;top:122px;width:189px;height:71px;background:#ececec;"><div class="cn"></div><div class="hd" style="height:21px"><span>Parameters</span></div></div>
<div class="a" style="left:2352px;top:147px;width:118px;height:19px;background:#f0f0f0"></div>
<div class="t" style="left:2376.0px;top:150px;font-size:15.5px;font-family:'DejaVu Sans',sans-serif;transform:scaleX(1.0121);transform-origin:0 0;">Reference</div>
<div class="a" style="left:2352px;top:169px;width:162px;height:19px;background:#f0f0f0"></div>
<div class="t" style="left:2376.0px;top:172px;font-size:15.5px;font-family:'DejaVu Sans',sans-serif;color:#a9a9a9;text-shadow:1px 1px 0 #fff">XYZ Adjustment</div>
<div class="a" style="left:2353px;top:149px;width:15.5px;height:15.5px;background:#fff;border:2px solid #6e6e6e;border-right-color:#fafafa;border-bottom-color:#fafafa"></div>
<div class="a" style="left:2353px;top:171px;width:15.5px;height:15.5px;background:#f0f0f0;border:2px solid #7a7a7a;border-right-color:#fafafa;border-bottom-color:#fafafa"></div>
<div class="a" style="left:3px;top:193px;width:2528px;height:1.5px;background:#b8b8b8"></div>
<div class="a" style="left:0px;top:194.5px;width:2536px;height:4.5px;background:#7c7c7c"></div>
<div class="a" style="left:3px;top:199px;width:2420px;height:3px;background:#fbfbfb"></div>
<div class="a" style="left:2145px;top:166px;width:30px;height:29px;background:#f0f0f0"></div>
<svg class="a" style="left:2143px;top:164px" width="34" height="31" viewBox="0 0 34 31"><defs><linearGradient id="bc1" x1="0" y1="0" x2="1" y2="1"><stop offset="0" stop-color="#2f7be0"/><stop offset="0.5" stop-color="#0e55c0"/><stop offset="1" stop-color="#082f80"/></linearGradient><linearGradient id="bw1" x1="0" y1="0" x2="0.6" y2="1"><stop offset="0" stop-color="#ffffff"/><stop offset="1" stop-color="#a8d0f8"/></linearGradient></defs><path d="M2.3 4.4L20.8 1.3L21.7 24.4L3.4 29.4Z" fill="url(#bc1)"/><path d="M5.4 7.6L18.2 5.3L18.8 21.8L6 25.4Z" fill="url(#bw1)"/><path d="M7.8 16.7L11.6 20.9L16.3 9.4" stroke="#dfa71c" stroke-width="1.9" fill="none" stroke-linecap="round" stroke-linejoin="round"/><path d="M16.6 18.2L29.5 12.6" stroke="#2d6fcc" stroke-width="3.6" stroke-linecap="round"/><path d="M17.2 17.4L28.5 12.5" stroke="#8cc0f4" stroke-width="1.2" stroke-linecap="round"/><path d="M14.6 19.2L17.2 16.6L17.8 19.6Z" fill="#8a7a30"/><circle cx="29.2" cy="12.6" r="1.9" fill="#dc4a22"/></svg>
<div class="a" style="left:2309px;top:168px;width:29px;height:31.5px;background:#f0f0f0"></div>
<svg class="a" style="left:2307px;top:167.5px" width="34" height="31" viewBox="0 0 34 31"><defs><linearGradient id="bc2" x1="0" y1="0" x2="1" y2="1"><stop offset="0" stop-color="#2f7be0"/><stop offset="0.5" stop-color="#0e55c0"/><stop offset="1" stop-color="#082f80"/></linearGradient><linearGradient id="bw2" x1="0" y1="0" x2="0.6" y2="1"><stop offset="0" stop-color="#ffffff"/><stop offset="1" stop-color="#a8d0f8"/></linearGradient></defs><path d="M2.3 4.4L20.8 1.3L21.7 24.4L3.4 29.4Z" fill="url(#bc2)"/><path d="M5.4 7.6L18.2 5.3L18.8 21.8L6 25.4Z" fill="url(#bw2)"/><path d="M7.8 16.7L11.6 20.9L16.3 9.4" stroke="#dfa71c" stroke-width="1.9" fill="none" stroke-linecap="round" stroke-linejoin="round"/><path d="M16.6 18.2L29.5 12.6" stroke="#2d6fcc" stroke-width="3.6" stroke-linecap="round"/><path d="M17.2 17.4L28.5 12.5" stroke="#8cc0f4" stroke-width="1.2" stroke-linecap="round"/><path d="M14.6 19.2L17.2 16.6L17.8 19.6Z" fill="#8a7a30"/><circle cx="29.2" cy="12.6" r="1.9" fill="#dc4a22"/></svg>
<!-- sec_table -->
<div class="gb" style="left:6px;top:203px;width:2415px;height:269px;background:#f0f0f0;border-color:#a0a0a0 #35d335 #35d335 #35d335;border-radius:9px 9px 0 0"><div class="cn"></div><div class="hd" style="height:18px;border-bottom:none;background:#e8eef8"></div></div>
<div class="t" style="left:17.0px;top:210px;font-size:11px;font-family:'DejaVu Sans',sans-serif;font-weight:bold;transform:scaleX(1.0312);transform-origin:0 0;color:#4a4a4a">( Average dE: 0.39 [0.01,0.39,0.00] max: 0.54 [CIE2000] ) [Absolute Y w/gamma]</div>
<div class="a" style="left:10px;top:221px;width:2386px;height:224px;background:#fff;border-top:2px solid #808080;border-left:2px solid #808080"></div>
<div class="a" style="left:12px;top:223px;width:69px;height:28px;background:#f0f0f0;border-right:1.5px solid #6a6a6a;border-bottom:1.5px solid #6a6a6a;border-top:1px solid #fff;border-left:1px solid #fff"></div>
<div class="t" style="left:17.3px;top:229.0px;font-size:15px;font-family:'Liberation Sans',sans-serif;font-weight:bold;color:#000">% White</div>
<div class="a" style="left:12px;top:251px;width:69px;height:32.5px;background:#f0f0f0;border-right:1.5px solid #6a6a6a;border-bottom:1.5px solid #6a6a6a;border-top:1px solid #fff;border-left:1px solid #fff"></div>
<div class="t" style="left:42.3px;top:259.2px;font-size:15px;font-family:'Liberation Sans',sans-serif;font-weight:bold;color:#000">x</div>
<div class="a" style="left:12px;top:283.5px;width:69px;height:32.5px;background:#f0f0f0;border-right:1.5px solid #6a6a6a;border-bottom:1.5px solid #6a6a6a;border-top:1px solid #fff;border-left:1px solid #fff"></div>
<div class="t" style="left:42.3px;top:291.8px;font-size:15px;font-family:'Liberation Sans',sans-serif;font-weight:bold;color:#000">y</div>
<div class="a" style="left:12px;top:316px;width:69px;height:32.5px;background:#f0f0f0;border-right:1.5px solid #6a6a6a;border-bottom:1.5px solid #6a6a6a;border-top:1px solid #fff;border-left:1px solid #fff"></div>
<div class="t" style="left:41.5px;top:324.2px;font-size:15px;font-family:'Liberation Sans',sans-serif;font-weight:bold;color:#000">Y</div>
<div class="a" style="left:12px;top:348.5px;width:69px;height:32.5px;background:#f0f0f0;border-right:1.5px solid #6a6a6a;border-bottom:1.5px solid #6a6a6a;border-top:1px solid #fff;border-left:1px solid #fff"></div>
<div class="t" style="left:21.1px;top:356.8px;font-size:15px;font-family:'Liberation Sans',sans-serif;font-weight:bold;color:#000">Delta E</div>
<div class="a" style="left:12px;top:381px;width:69px;height:31.5px;background:#f0f0f0;border-right:1.5px solid #6a6a6a;border-bottom:1.5px solid #6a6a6a;border-top:1px solid #fff;border-left:1px solid #fff"></div>
<div class="t" style="left:18.6px;top:388.8px;font-size:15px;font-family:'Liberation Sans',sans-serif;font-weight:bold;color:#000">delta xy</div>
<div class="a" style="left:12px;top:412.5px;width:69px;height:31.0px;background:#f0f0f0;border-right:1.5px solid #6a6a6a;border-bottom:1.5px solid #6a6a6a;border-top:1px solid #fff;border-left:1px solid #fff"></div>
<div class="t" style="left:18.7px;top:420.0px;font-size:15px;font-family:'Liberation Sans',sans-serif;font-weight:bold;color:#000">Y target</div>
<div class="a" style="left:81px;top:223px;width:455px;height:28px;background:#828282;border-right:1.5px solid #707070;border-bottom:1.5px solid #707070;border-top:1px solid #f4f4f4;border-left:2px solid #f4f4f4"></div>
<div class="t" style="left:305.3px;top:229px;font-size:15px;font-family:'Liberation Sans',sans-serif;font-weight:bold;">0</div>
<div class="a" style="left:536px;top:223px;width:458px;height:28px;background:#9b9b9b;border-right:1.5px solid #707070;border-bottom:1.5px solid #707070;border-top:1px solid #f4f4f4;border-left:2px solid #f4f4f4"></div>
<div class="t" style="left:761.8px;top:229px;font-size:15px;font-family:'Liberation Sans',sans-serif;font-weight:bold;">1</div>
<div class="a" style="left:994px;top:223px;width:458px;height:28px;background:#b4b4b4;border-right:1.5px solid #707070;border-bottom:1.5px solid #707070;border-top:1px solid #f4f4f4;border-left:2px solid #f4f4f4"></div>
<div class="t" style="left:1219.8px;top:229px;font-size:15px;font-family:'Liberation Sans',sans-serif;font-weight:bold;">2</div>
<div class="a" style="left:1452px;top:223px;width:463px;height:28px;background:#cbcbcb;border-right:1.5px solid #707070;border-bottom:1.5px solid #707070;border-top:1px solid #f4f4f4;border-left:2px solid #f4f4f4"></div>
<div class="t" style="left:1680.3px;top:229px;font-size:15px;font-family:'Liberation Sans',sans-serif;font-weight:bold;">3</div>
<div class="a" style="left:1915px;top:223px;width:458px;height:28px;background:#e2e2e2;border-right:1.5px solid #707070;border-bottom:1.5px solid #707070;border-top:1px solid #f4f4f4;border-left:2px solid #f4f4f4"></div>
<div class="t" style="left:2140.8px;top:229px;font-size:15px;font-family:'Liberation Sans',sans-serif;font-weight:bold;">4</div>
<div class="a" style="left:81px;top:251px;width:455px;height:32.5px;background:#fff;border-right:1.5px solid #c4c4c4;border-bottom:1.5px solid #c4c4c4"></div>
<div class="t" style="left:493.4px;top:260px;font-size:15.5px;font-family:'Liberation Sans',sans-serif;transform:scaleX(0.8600);transform-origin:0 0;">0.2569</div>
<div class="a" style="left:536px;top:251px;width:458px;height:32.5px;background:#fff;border-right:1.5px solid #c4c4c4;border-bottom:1.5px solid #c4c4c4"></div>
<div class="t" style="left:951.4px;top:260px;font-size:15.5px;font-family:'Liberation Sans',sans-serif;transform:scaleX(0.8600);transform-origin:0 0;">0.2658</div>
<div class="a" style="left:994px;top:251px;width:458px;height:32.5px;background:#fff;border-right:1.5px solid #c4c4c4;border-bottom:1.5px solid #c4c4c4"></div>
<div class="t" style="left:1409.4px;top:260px;font-size:15.5px;font-family:'Liberation Sans',sans-serif;transform:scaleX(0.8600);transform-origin:0 0;">0.2693</div>
<div class="a" style="left:1452px;top:251px;width:463px;height:32.5px;background:#fff;border-right:1.5px solid #c4c4c4;border-bottom:1.5px solid #c4c4c4"></div>
<div class="t" style="left:1872.4px;top:260px;font-size:15.5px;font-family:'Liberation Sans',sans-serif;transform:scaleX(0.8600);transform-origin:0 0;">0.2742</div>
<div class="a" style="left:1915px;top:251px;width:458px;height:32.5px;background:#fff;border-right:1.5px solid #c4c4c4;border-bottom:1.5px solid #c4c4c4"></div>
<div class="t" style="left:2330.4px;top:260px;font-size:15.5px;font-family:'Liberation Sans',sans-serif;transform:scaleX(0.8600);transform-origin:0 0;">0.2767</div>
<div class="a" style="left:81px;top:283.5px;width:455px;height:32.5px;background:#fff;border-right:1.5px solid #c4c4c4;border-bottom:1.5px solid #c4c4c4"></div>
<div class="t" style="left:493.4px;top:292.5px;font-size:15.5px;font-family:'Liberation Sans',sans-serif;transform:scaleX(0.8600);transform-origin:0 0;">0.2135</div>
<div class="a" style="left:536px;top:283.5px;width:458px;height:32.5px;background:#fff;border-right:1.5px solid #c4c4c4;border-bottom:1.5px solid #c4c4c4"></div>
<div class="t" style="left:951.4px;top:292.5px;font-size:15.5px;font-family:'Liberation Sans',sans-serif;transform:scaleX(0.8600);transform-origin:0 0;">0.2250</div>
<div class="a" style="left:994px;top:283.5px;width:458px;height:32.5px;background:#fff;border-right:1.5px solid #c4c4c4;border-bottom:1.5px solid #c4c4c4"></div>
<div class="t" style="left:1409.4px;top:292.5px;font-size:15.5px;font-family:'Liberation Sans',sans-serif;transform:scaleX(0.8600);transform-origin:0 0;">0.2495</div>
<div class="a" style="left:1452px;top:283.5px;width:463px;height:32.5px;background:#fff;border-right:1.5px solid #c4c4c4;border-bottom:1.5px solid #c4c4c4"></div>
<div class="t" style="left:1872.4px;top:292.5px;font-size:15.5px;font-family:'Liberation Sans',sans-serif;transform:scaleX(0.8600);transform-origin:0 0;">0.2593</div>
<div class="a" style="left:1915px;top:283.5px;width:458px;height:32.5px;background:#fff;border-right:1.5px solid #c4c4c4;border-bottom:1.5px solid #c4c4c4"></div>
<div class="t" style="left:2330.4px;top:292.5px;font-size:15.5px;font-family:'Liberation Sans',sans-serif;transform:scaleX(0.8600);transform-origin:0 0;">0.2655</div>
<div class="a" style="left:81px;top:316px;width:455px;height:32.5px;background:#fff;border-right:1.5px solid #c4c4c4;border-bottom:1.5px solid #c4c4c4"></div>
<div class="t" style="left:500.8px;top:325px;font-size:15.5px;font-family:'Liberation Sans',sans-serif;transform:scaleX(0.8600);transform-origin:0 0;">0.021</div>
<div class="a" style="left:536px;top:316px;width:458px;height:32.5px;background:#fff;border-right:1.5px solid #c4c4c4;border-bottom:1.5px solid #c4c4c4"></div>
<div class="t" style="left:958.8px;top:325px;font-size:15.5px;font-family:'Liberation Sans',sans-serif;transform:scaleX(0.8600);transform-origin:0 0;">0.017</div>
<div class="a" style="left:994px;top:316px;width:458px;height:32.5px;background:#fff;border-right:1.5px solid #c4c4c4;border-bottom:1.5px solid #c4c4c4"></div>
<div class="t" style="left:1416.8px;top:325px;font-size:15.5px;font-family:'Liberation Sans',sans-serif;transform:scaleX(0.8600);transform-origin:0 0;">0.026</div>
<div class="a" style="left:1452px;top:316px;width:463px;height:32.5px;background:#fff;border-right:1.5px solid #c4c4c4;border-bottom:1.5px solid #c4c4c4"></div>
<div class="t" style="left:1879.8px;top:325px;font-size:15.5px;font-family:'Liberation Sans',sans-serif;transform:scaleX(0.8600);transform-origin:0 0;">0.043</div>
<div class="a" style="left:1915px;top:316px;width:458px;height:32.5px;background:#fff;border-right:1.5px solid #c4c4c4;border-bottom:1.5px solid #c4c4c4"></div>
<div class="t" style="left:2337.8px;top:325px;font-size:15.5px;font-family:'Liberation Sans',sans-serif;transform:scaleX(0.8600);transform-origin:0 0;">0.062</div>
<div class="a" style="left:81px;top:348.5px;width:455px;height:32.5px;background:#e0e0e0;border-right:1.5px solid #c4c4c4;border-bottom:1.5px solid #c4c4c4"></div>
<div class="a" style="left:536px;top:348.5px;width:458px;height:32.5px;background:#b0ffab;border-right:1.5px solid #c4c4c4;border-bottom:1.5px solid #c4c4c4"></div>
<div class="t" style="left:970.0px;top:357.5px;font-size:15.5px;font-family:'Liberation Sans',sans-serif;font-weight:bold;">0.3</div>
<div class="a" style="left:994px;top:348.5px;width:458px;height:32.5px;background:#b0ffab;border-right:1.5px solid #c4c4c4;border-bottom:1.5px solid #c4c4c4"></div>
<div class="t" style="left:1428.0px;top:357.5px;font-size:15.5px;font-family:'Liberation Sans',sans-serif;font-weight:bold;">0.3</div>
<div class="a" style="left:1452px;top:348.5px;width:463px;height:32.5px;background:#b0ffab;border-right:1.5px solid #c4c4c4;border-bottom:1.5px solid #c4c4c4"></div>
<div class="t" style="left:1891.0px;top:357.5px;font-size:15.5px;font-family:'Liberation Sans',sans-serif;font-weight:bold;">0.4</div>
<div class="a" style="left:1915px;top:348.5px;width:458px;height:32.5px;background:#b0ffab;border-right:1.5px solid #c4c4c4;border-bottom:1.5px solid #c4c4c4"></div>
<div class="t" style="left:2349.0px;top:357.5px;font-size:15.5px;font-family:'Liberation Sans',sans-serif;font-weight:bold;">0.5</div>
<div class="a" style="left:81px;top:381px;width:455px;height:31.5px;background:#f0f0f0;border-right:1.5px solid #c4c4c4;border-bottom:1.5px solid #c4c4c4"></div>
<div class="a" style="left:536px;top:381px;width:458px;height:31.5px;background:#f0f0f0;border-right:1.5px solid #c4c4c4;border-bottom:1.5px solid #c4c4c4"></div>
<div class="t" style="left:952.4px;top:390px;font-size:15.5px;font-family:'Liberation Sans',sans-serif;transform:scaleX(0.8600);transform-origin:0 0;">0.1141</div>
<div class="a" style="left:994px;top:381px;width:458px;height:31.5px;background:#f0f0f0;border-right:1.5px solid #c4c4c4;border-bottom:1.5px solid #c4c4c4"></div>
<div class="t" style="left:1409.4px;top:390px;font-size:15.5px;font-family:'Liberation Sans',sans-serif;transform:scaleX(0.8600);transform-origin:0 0;">0.0906</div>
<div class="a" style="left:1452px;top:381px;width:463px;height:31.5px;background:#f0f0f0;border-right:1.5px solid #c4c4c4;border-bottom:1.5px solid #c4c4c4"></div>
<div class="t" style="left:1872.4px;top:390px;font-size:15.5px;font-family:'Liberation Sans',sans-serif;transform:scaleX(0.8600);transform-origin:0 0;">0.0796</div>
<div class="a" style="left:1915px;top:381px;width:458px;height:31.5px;background:#f0f0f0;border-right:1.5px solid #c4c4c4;border-bottom:1.5px solid #c4c4c4"></div>
<div class="t" style="left:2330.4px;top:390px;font-size:15.5px;font-family:'Liberation Sans',sans-serif;transform:scaleX(0.8600);transform-origin:0 0;">0.0730</div>
<div class="a" style="left:81px;top:412.5px;width:455px;height:31.0px;background:#e0e0e0;border-right:1.5px solid #c4c4c4;border-bottom:1.5px solid #c4c4c4"></div>
<div class="t" style="left:500.8px;top:421.5px;font-size:15.5px;font-family:'Liberation Sans',sans-serif;transform:scaleX(0.8600);transform-origin:0 0;">0.021</div>
<div class="a" style="left:536px;top:412.5px;width:458px;height:31.0px;background:#e0e0e0;border-right:1.5px solid #c4c4c4;border-bottom:1.5px solid #c4c4c4"></div>
<div class="t" style="left:958.8px;top:421.5px;font-size:15.5px;font-family:'Liberation Sans',sans-serif;transform:scaleX(0.8600);transform-origin:0 0;">0.023</div>
<div class="a" style="left:994px;top:412.5px;width:458px;height:31.0px;background:#e0e0e0;border-right:1.5px solid #c4c4c4;border-bottom:1.5px solid #c4c4c4"></div>
<div class="t" style="left:1416.8px;top:421.5px;font-size:15.5px;font-family:'Liberation Sans',sans-serif;transform:scaleX(0.8600);transform-origin:0 0;">0.029</div>
<div class="a" style="left:1452px;top:412.5px;width:463px;height:31.0px;background:#e0e0e0;border-right:1.5px solid #c4c4c4;border-bottom:1.5px solid #c4c4c4"></div>
<div class="t" style="left:1879.8px;top:421.5px;font-size:15.5px;font-family:'Liberation Sans',sans-serif;transform:scaleX(0.8600);transform-origin:0 0;">0.043</div>
<div class="a" style="left:1915px;top:412.5px;width:458px;height:31.0px;background:#e0e0e0;border-right:1.5px solid #c4c4c4;border-bottom:1.5px solid #c4c4c4"></div>
<div class="t" style="left:2337.8px;top:421.5px;font-size:15.5px;font-family:'Liberation Sans',sans-serif;transform:scaleX(0.8600);transform-origin:0 0;">0.064</div>
<div class="a" style="left:2374px;top:223px;width:22px;height:221px;background:#f0f0f0"></div>
<div class="a" style="left:2396px;top:222px;width:23px;height:248px;background:#ececec"></div>
<div class="a" style="left:2397px;top:223.5px;width:22px;height:1.5px;background:#22dd22"></div>
<svg class="a" style="left:2379px;top:230px" width="11" height="8"><path d="M0 7.5L5.5 0.5L11 7.5Z" fill="#a9a9a9"/></svg>
<svg class="a" style="left:2379px;top:430px" width="11" height="8"><path d="M0 0.5L5.5 7.5L11 0.5Z" fill="#8c8c8c"/></svg>
<div class="a" style="left:12px;top:445px;width:2384px;height:22px;background:#f0f0f0"></div>
<svg class="a" style="left:18px;top:449px" width="8" height="12"><path d="M7.5 0L0.5 6L7.5 12Z" fill="#a9a9a9"/></svg>
<svg class="a" style="left:2360px;top:449px" width="8" height="12"><path d="M0.5 0L7.5 6L0.5 12Z" fill="#a9a9a9"/></svg>
<div class="a" style="left:2421px;top:199px;width:2px;height:275px;background:#fbfbfb"></div>
<div class="a" style="left:2423px;top:199px;width:2px;height:277px;background:#a0a0a0"></div>
<div class="a" style="left:2424.5px;top:199px;width:111.5px;height:281px;background:#888"></div>
<div class="gb" style="left:2429px;top:203px;width:100px;height:124px;background:#ececec;box-shadow:0 0 0 1.5px #c8c8c8"><div class="cn"></div><div class="hd" style="height:21px"><span>Display</span></div></div>
<div class="a" style="left:2438px;top:227px;width:82px;height:19px;background:#f0f0f0"></div>
<div class="t" style="left:2461.0px;top:230px;font-size:15.5px;font-family:'DejaVu Sans',sans-serif;color:#a9a9a9;text-shadow:1px 1px 0 #fff;">Sensor</div>
<svg class="a" style="left:2438px;top:226px" width="16" height="16"><circle cx="8" cy="8" r="6" fill="#fff"/><path d="M3.2 12.2A6.3 6.3 0 0 1 12.5 3.4" stroke="#707070" stroke-width="1.6" fill="none"/><path d="M12.8 3.8A6.3 6.3 0 0 1 3.6 12.6" stroke="#e4e4e4" stroke-width="1.4" fill="none"/></svg>
<div class="a" style="left:2438px;top:247px;width:82px;height:19px;background:#f0f0f0"></div>
<div class="t" style="left:2461.0px;top:250px;font-size:15.5px;font-family:'DejaVu Sans',sans-serif;color:#000;">RGB</div>
<svg class="a" style="left:2438px;top:246px" width="16" height="16"><circle cx="8" cy="8" r="6" fill="#fff"/><path d="M3.2 12.2A6.3 6.3 0 0 1 12.5 3.4" stroke="#707070" stroke-width="1.6" fill="none"/><path d="M12.8 3.8A6.3 6.3 0 0 1 3.6 12.6" stroke="#e4e4e4" stroke-width="1.4" fill="none"/></svg>
<div class="a" style="left:2438px;top:267px;width:82px;height:19px;background:#f0f0f0"></div>
<div class="t" style="left:2461.0px;top:270px;font-size:15.5px;font-family:'DejaVu Sans',sans-serif;color:#000;">XYZ</div>
<svg class="a" style="left:2438px;top:266px" width="16" height="16"><circle cx="8" cy="8" r="6" fill="#fff"/><path d="M3.2 12.2A6.3 6.3 0 0 1 12.5 3.4" stroke="#707070" stroke-width="1.6" fill="none"/><path d="M12.8 3.8A6.3 6.3 0 0 1 3.6 12.6" stroke="#e4e4e4" stroke-width="1.4" fill="none"/></svg>
<div class="a" style="left:2438px;top:287px;width:82px;height:19px;background:#f0f0f0"></div>
<div class="t" style="left:2461.0px;top:290px;font-size:15.5px;font-family:'DejaVu Sans',sans-serif;color:#000;">xyz</div>
<svg class="a" style="left:2438px;top:286px" width="16" height="16"><circle cx="8" cy="8" r="6" fill="#fff"/><path d="M3.2 12.2A6.3 6.3 0 0 1 12.5 3.4" stroke="#707070" stroke-width="1.6" fill="none"/><path d="M12.8 3.8A6.3 6.3 0 0 1 3.6 12.6" stroke="#e4e4e4" stroke-width="1.4" fill="none"/></svg>
<div class="a" style="left:2438px;top:306px;width:82px;height:19px;background:#f0f0f0"></div>
<div class="t" style="left:2461.0px;top:309px;font-size:15.5px;font-family:'DejaVu Sans',sans-serif;color:#000;">xyY</div>
<svg class="a" style="left:2438px;top:305px" width="16" height="16"><circle cx="8" cy="8" r="6" fill="#fff"/><path d="M3.2 12.2A6.3 6.3 0 0 1 12.5 3.4" stroke="#707070" stroke-width="1.6" fill="none"/><path d="M12.8 3.8A6.3 6.3 0 0 1 3.6 12.6" stroke="#e4e4e4" stroke-width="1.4" fill="none"/><circle cx="8" cy="8" r="2.3" fill="#000"/></svg>
<div class="a" style="left:2425px;top:330.5px;width:104px;height:111.5px;background:#dedede"></div>
<div class="a" style="left:2425px;top:330.5px;width:104px;height:37.0px;background:#ececec;border:1.5px solid #fdfdfd;border-right-color:#d8d8d8;border-bottom-color:#d0d0d0"></div>
<div class="a" style="left:2425px;top:368.5px;width:104px;height:36.0px;background:#ececec;border:1.5px solid #fdfdfd;border-right-color:#d8d8d8;border-bottom-color:#d0d0d0"></div>
<div class="a" style="left:2425px;top:405.5px;width:104px;height:36.5px;background:#ececec;border:1.5px solid #fdfdfd;border-right-color:#d8d8d8;border-bottom-color:#d0d0d0"></div>
<div class="t" style="left:2488.0px;top:345px;font-size:15.5px;font-family:'DejaVu Sans',sans-serif;">Go</div>
<div class="t" style="left:2473.0px;top:381px;font-size:15.5px;font-family:'DejaVu Sans',sans-serif;transform:scaleX(1.0211);transform-origin:0 0;">Delete</div>
<div class="t" style="left:2482.0px;top:419px;font-size:15.5px;font-family:'DejaVu Sans',sans-serif;">Refs</div>
<svg class="a" style="left:2432px;top:333px" width="42" height="35" viewBox="0 0 42 35"><rect x="0.5" y="1.5" width="13" height="26" fill="#e9e9e9"/><rect x="27" y="6" width="13.5" height="27.5" fill="#e9e9e9"/><path d="M1.5 1V28M12.5 1V28M36.5 5.5V34M40 5.5V34" stroke="#1a1a1a" stroke-width="2.4" stroke-dasharray="2.3 0.7"/><path d="M4 4H10V9H4ZM4 12H10V17H4ZM4 20H10V25H4ZM29 9H35V14H29ZM29 17H35V22H29ZM29 25H35V30H29Z" fill="#fff" stroke="#666" stroke-width="0.7"/><path d="M8.5 1.2C13 0 20 -0.3 24.5 0.8C25.5 7 27 13 30 18.5C32 22 35 26 37 27.5L33 34.5H20C17 33 15.5 30 15.5 27C16 20 14 12 10 6Z" fill="#2b2730" stroke="#151318" stroke-width="0.8"/><path d="M13 7.5L25 6M14.8 15.5L27.5 13.5M16 23.5L32 21.5M16.5 30L35 27.5" stroke="#15131a" stroke-width="1.6"/><path d="M15.5 8.5L23.5 7.5L25.5 12.5L16.5 14ZM17 16.8L26.5 15.2L29.5 20.3L17.5 22ZM17.8 25L31 23L33.5 26.5L18 28.5Z" fill="#3f3d52"/></svg>
<svg class="a" style="left:2433px;top:370px" width="37" height="34" viewBox="0 0 37 34"><defs><linearGradient id="bin" x1="0" y1="0" x2="0.9" y2="1"><stop offset="0" stop-color="#e8fbff"/><stop offset="0.5" stop-color="#aadcf8"/><stop offset="1" stop-color="#5fa8e4"/></linearGradient></defs><path d="M1 6.5C11 3 24 0.8 35.5 0.5L33 28.5C26 32.5 15 34 7 32.5Z" fill="url(#bin)"/><path d="M12 4C19 1.5 28 0.7 35.5 0.5L35 5C28 3 19 3 12 4Z" fill="#6fb2ea"/><ellipse cx="19" cy="27.5" rx="11.5" ry="4" transform="rotate(-8 19 27.5)" fill="#d6f0fc" opacity="0.75"/><path d="M17.5 18.5A7.5 7.5 0 0 1 28 12L29.5 9.5L31 17L24 16.5L26 14.5A4.8 4.8 0 0 0 20.5 19Z" fill="#13a031"/><path d="M31.5 20A7.5 7.5 0 0 1 21 26.5L19.5 29L18 21.5L25 22L23 24A4.8 4.8 0 0 0 28.5 19.5Z" fill="#13a031"/></svg>
<svg class="a" style="left:2432px;top:410px" width="42" height="30" viewBox="0 0 42 30"><path d="M0 29V14.5L2 12.5L3.5 10L5.5 7L7 4.5L8.3 2.5L9.5 5.5L11 7.5L12.5 6.5L14 9.5L16 11.5L18 10L19.5 6L21 3L23 0.8L25 2.5L27 3.5L28.5 7L30 9.5L32 11.5L33.5 10L35 8.5L37 9L38.5 11.5L40.7 12V29Z" fill="#ffff00"/><path d="M0 29V15.5L2.5 14.5V29Z" fill="#000080"/><path d="M2.5 29V13.5L4.5 11V29Z" fill="#ff00ff"/><path d="M4.5 29V10.5L6.5 7L8.3 4L9.5 7L10.5 9V29Z" fill="#0000ff"/><path d="M10.5 29V9L12.5 8L14 11V29Z" fill="#00ffff"/><path d="M14 29V11L16 13L18 11.5L19 9.5V29Z" fill="#00ff00"/><path d="M19 29V9L21 5L23 2.5L25 4L27 5V29Z" fill="#ffff00"/><path d="M27 29V5L28.5 8.5L30 11L31.5 12.5V29Z" fill="#800000"/><path d="M31.5 29V12.8H33.5L35 10H37L38.5 13H40.7V29Z" fill="#ff0000"/></svg>
<div class="a" style="left:2432px;top:448px;width:71px;height:23px;background:#f0f0f0"></div>
<div class="a" style="left:2433px;top:450.5px;width:15.5px;height:16px;background:#fff;border:2px solid #6e6e6e;border-right-color:#fafafa;border-bottom-color:#fafafa"></div>
<div class="t" style="left:2456.0px;top:452px;font-size:15.5px;font-family:'DejaVu Sans',sans-serif;">Edit</div>
<div class="a" style="left:3px;top:472px;width:2418px;height:2.5px;background:#fbfbfb"></div>
<div class="a" style="left:3px;top:474.5px;width:2421px;height:2.5px;background:#9c9c9c"></div>
<div class="a" style="left:0px;top:477px;width:2536px;height:3px;background:#868686"></div>
<div class="a" style="left:3px;top:480px;width:2528px;height:3.5px;background:#fbfbfb"></div>
<!-- sec_left -->
<div class="gb" style="left:6px;top:483.5px;width:472px;height:863.5px;background:#ececec"><div class="cn"></div><div class="hd" style="height:22px"><span>Selected color</span></div></div>
<div class="a" style="left:478px;top:480px;width:11px;height:870px;background:linear-gradient(90deg,#fbfbfb 0 2px,#8a8a8a 2px 4.5px,#9e9e9e 4.5px 6.5px,#fbfbfb 6.5px 11px)"></div>
<div class="a" style="left:18px;top:512px;width:141px;height:17px;background:#f0f0f0"></div>
<div class="t" style="left:22.0px;top:515px;font-size:15.5px;font-family:'DejaVu Sans',sans-serif;">RGB Levels</div>
<div class="a" style="left:287px;top:509px;width:160px;height:18px;background:#f0f0f0"></div>
<div class="t" style="left:301.0px;top:512.5px;font-size:15.5px;font-family:'DejaVu Sans',sans-serif;transform:scaleX(1.0309);transform-origin:0 0;">Current Measure</div>
<div class="a" style="left:17px;top:542px;width:251px;height:108px;background:#f0f0f0"></div>
<div class="a" style="left:17px;top:597px;width:251px;height:1px;background:repeating-linear-gradient(90deg,#808080 0 4px,transparent 4px 7px)"></div>
<svg class="a" style="left:17px;top:634px" width="251" height="16" viewBox="17 634 251 16"><rect x="17" y="643" width="251" height="6.5" fill="#000"/><path d="M18 644Q49.5 628.5 81 644Z" fill="#000"/><path d="M22 643.5Q49.5 631 77 643.5Z" fill="#a00000"/><path d="M82 644Q113.5 628.5 145 644Z" fill="#000"/><path d="M86 643.5Q113.5 631 141 643.5Z" fill="#00a000"/><path d="M145 644Q176.5 628.5 208 644Z" fill="#000"/><path d="M149 643.5Q176.5 631 204 643.5Z" fill="#0000a0"/><path d="M209 644Q240.5 628.5 272 644Z" fill="#000"/><path d="M213 643.5Q240.5 631 268 643.5Z" fill="#c08000"/></svg>
<div class="t" style="left:27.0px;top:617px;font-size:17.5px;font-family:'Liberation Serif',serif;transform:scaleX(1.1796);transform-origin:0 0;text-shadow:0.3px 0 0 #000">0.0%</div>
<div class="t" style="left:90.5px;top:617px;font-size:17.5px;font-family:'Liberation Serif',serif;transform:scaleX(1.1796);transform-origin:0 0;text-shadow:0.3px 0 0 #000">0.0%</div>
<div class="t" style="left:154.5px;top:617px;font-size:17.5px;font-family:'Liberation Serif',serif;transform:scaleX(1.1796);transform-origin:0 0;text-shadow:0.3px 0 0 #000">0.0%</div>
<div class="t" style="left:212.0px;top:617px;font-size:17.5px;font-family:'Liberation Serif',serif;transform:scaleX(1.2257);transform-origin:0 0;text-shadow:0.3px 0 0 #000">dE 0.0</div>
<div class="a" style="left:20px;top:667px;width:240px;height:91px;background:#f0f0f0"></div>
<div class="t" style="left:44.0px;top:668px;font-size:16.5px;font-family:'Liberation Sans',sans-serif;font-weight:bold;transform:scaleX(1.0605);transform-origin:0 0;">Measure</div>
<div class="t" style="left:159.0px;top:668px;font-size:16.5px;font-family:'Liberation Sans',sans-serif;font-weight:bold;transform:scaleX(1.0277);transform-origin:0 0;">Reference</div>
<div class="a" style="left:18px;top:778px;width:57px;height:17px;background:#f0f0f0"></div>
<div class="t" style="left:22.0px;top:781px;font-size:15.5px;font-family:'DejaVu Sans',sans-serif;transform:scaleX(1.0427);transform-origin:0 0;">Target</div>
<div class="a" style="left:62.5px;top:798px;width:145px;height:111px;border:1px solid #000;background:conic-gradient(from 0deg at 50% 50%,#40ff00 0deg,#a0e800 25deg,#ffc000 50deg,#ff6000 70deg,#ff0000 90deg,#ff0040 110deg,#ff0090 130deg,#c000b0 155deg,#8000d0 180deg,#3000f0 210deg,#0000ff 232deg,#0050d0 255deg,#0090a0 275deg,#00c890 290deg,#00ff70 310deg,#20ff30 335deg,#40ff00 360deg)"></div>
<svg class="a" style="left:62px;top:798px" width="146" height="112" viewBox="62 798 146 112">
<rect x="84.5" y="814.5" width="101" height="78.5" rx="9.5" fill="#000" stroke="#fff" stroke-width="1.1"/>
<path d="M81 853.5H190" stroke="#fff" stroke-width="1" stroke-dasharray="4 2.6"/><path d="M135.5 814V893" stroke="#fff" stroke-width="1" stroke-dasharray="4 2.6"/>
<ellipse cx="134.5" cy="852.5" rx="26.6" ry="19.7" fill="none" stroke="#fff" stroke-width="1" stroke-dasharray="3.6 3.2"/></svg>
<div class="a" style="left:276px;top:539px;width:190px;height:799px;background:#f0f0f0;border-top:2px solid #808080;border-left:2px solid #808080"></div>
<div class="a" style="left:278px;top:541.0px;width:73px;height:28.799999999999955px;background:#f0f0f0;border-right:1.5px solid #6a6a6a;border-bottom:1.5px solid #6a6a6a;border-top:1px solid #fff"></div>
<div class="a" style="left:351px;top:541.0px;width:92.5px;height:28.799999999999955px;background:#fff;border-bottom:1.5px solid #c8c8c8;border-right:1px solid #c8c8c8"></div>
<div class="t" style="left:285.9px;top:546.5px;font-size:15px;font-family:'Liberation Sans',sans-serif;font-weight:bold;">Y cd/m<sup style="font-size:9px;line-height:0;vertical-align:6px">2</sup></div>
<div class="a" style="left:278px;top:569.8px;width:73px;height:28.800000000000068px;background:#f0f0f0;border-right:1.5px solid #6a6a6a;border-bottom:1.5px solid #6a6a6a;border-top:1px solid #fff"></div>
<div class="a" style="left:351px;top:569.8px;width:92.5px;height:28.800000000000068px;background:#fff;border-bottom:1.5px solid #c8c8c8;border-right:1px solid #c8c8c8"></div>
<div class="t" style="left:298.0px;top:575.3px;font-size:15px;font-family:'Liberation Sans',sans-serif;font-weight:bold;">Y ftL</div>
<div class="a" style="left:278px;top:598.6px;width:73px;height:28.699999999999932px;background:#f0f0f0;border-right:1.5px solid #6a6a6a;border-bottom:1.5px solid #6a6a6a;border-top:1px solid #fff"></div>
<div class="a" style="left:351px;top:598.6px;width:92.5px;height:28.699999999999932px;background:#fff;border-bottom:1.5px solid #c8c8c8;border-right:1px solid #c8c8c8"></div>
<div class="t" style="left:306.9px;top:604.1px;font-size:15px;font-family:'Liberation Sans',sans-serif;font-weight:bold;">T°</div>
<div class="a" style="left:278px;top:627.3px;width:73px;height:28.800000000000068px;background:#f0f0f0;border-right:1.5px solid #6a6a6a;border-bottom:1.5px solid #6a6a6a;border-top:1px solid #fff"></div>
<div class="a" style="left:351px;top:627.3px;width:92.5px;height:28.800000000000068px;background:#e0e0e0;border-bottom:1.5px solid #c8c8c8;border-right:1px solid #c8c8c8"></div>
<div class="t" style="left:309.5px;top:632.8px;font-size:15px;font-family:'Liberation Sans',sans-serif;font-weight:bold;">X</div>
<div class="a" style="left:278px;top:656.1px;width:73px;height:28.799999999999955px;background:#f0f0f0;border-right:1.5px solid #6a6a6a;border-bottom:1.5px solid #6a6a6a;border-top:1px solid #fff"></div>
<div class="a" style="left:351px;top:656.1px;width:92.5px;height:28.799999999999955px;background:#e0e0e0;border-bottom:1.5px solid #c8c8c8;border-right:1px solid #c8c8c8"></div>
<div class="t" style="left:309.5px;top:661.6px;font-size:15px;font-family:'Liberation Sans',sans-serif;font-weight:bold;">Y</div>
<div class="a" style="left:278px;top:684.9px;width:73px;height:28.800000000000068px;background:#f0f0f0;border-right:1.5px solid #6a6a6a;border-bottom:1.5px solid #6a6a6a;border-top:1px solid #fff"></div>
<div class="a" style="left:351px;top:684.9px;width:92.5px;height:28.800000000000068px;background:#e0e0e0;border-bottom:1.5px solid #c8c8c8;border-right:1px solid #c8c8c8"></div>
<div class="t" style="left:309.9px;top:690.4px;font-size:15px;font-family:'Liberation Sans',sans-serif;font-weight:bold;">Z</div>
<div class="a" style="left:278px;top:713.7px;width:73px;height:28.799999999999955px;background:#f0f0f0;border-right:1.5px solid #6a6a6a;border-bottom:1.5px solid #6a6a6a;border-top:1px solid #fff"></div>
<div class="a" style="left:351px;top:713.7px;width:92.5px;height:28.799999999999955px;background:#fff;border-bottom:1.5px solid #c8c8c8;border-right:1px solid #c8c8c8"></div>
<div class="t" style="left:309.1px;top:719.2px;font-size:15px;font-family:'Liberation Sans',sans-serif;font-weight:bold;">R</div>
<div class="a" style="left:278px;top:742.5px;width:73px;height:28.700000000000045px;background:#f0f0f0;border-right:1.5px solid #6a6a6a;border-bottom:1.5px solid #6a6a6a;border-top:1px solid #fff"></div>
<div class="a" style="left:351px;top:742.5px;width:92.5px;height:28.700000000000045px;background:#fff;border-bottom:1.5px solid #c8c8c8;border-right:1px solid #c8c8c8"></div>
<div class="t" style="left:308.7px;top:748.0px;font-size:15px;font-family:'Liberation Sans',sans-serif;font-weight:bold;">G</div>
<div class="a" style="left:278px;top:771.2px;width:73px;height:28.799999999999955px;background:#f0f0f0;border-right:1.5px solid #6a6a6a;border-bottom:1.5px solid #6a6a6a;border-top:1px solid #fff"></div>
<div class="a" style="left:351px;top:771.2px;width:92.5px;height:28.799999999999955px;background:#fff;border-bottom:1.5px solid #c8c8c8;border-right:1px solid #c8c8c8"></div>
<div class="t" style="left:309.1px;top:776.7px;font-size:15px;font-family:'Liberation Sans',sans-serif;font-weight:bold;">B</div>
<div class="a" style="left:278px;top:800.0px;width:73px;height:28.799999999999955px;background:#f0f0f0;border-right:1.5px solid #6a6a6a;border-bottom:1.5px solid #6a6a6a;border-top:1px solid #fff"></div>
<div class="a" style="left:351px;top:800.0px;width:92.5px;height:28.799999999999955px;background:#e0e0e0;border-bottom:1.5px solid #c8c8c8;border-right:1px solid #c8c8c8"></div>
<div class="t" style="left:310.3px;top:805.5px;font-size:15px;font-family:'Liberation Sans',sans-serif;font-weight:bold;">x</div>
<div class="a" style="left:278px;top:828.8px;width:73px;height:28.800000000000068px;background:#f0f0f0;border-right:1.5px solid #6a6a6a;border-bottom:1.5px solid #6a6a6a;border-top:1px solid #fff"></div>
<div class="a" style="left:351px;top:828.8px;width:92.5px;height:28.800000000000068px;background:#e0e0e0;border-bottom:1.5px solid #c8c8c8;border-right:1px solid #c8c8c8"></div>
<div class="t" style="left:310.3px;top:834.3px;font-size:15px;font-family:'Liberation Sans',sans-serif;font-weight:bold;">y</div>
<div class="a" style="left:278px;top:857.6px;width:73px;height:28.799999999999955px;background:#f0f0f0;border-right:1.5px solid #6a6a6a;border-bottom:1.5px solid #6a6a6a;border-top:1px solid #fff"></div>
<div class="a" style="left:351px;top:857.6px;width:92.5px;height:28.799999999999955px;background:#e0e0e0;border-bottom:1.5px solid #c8c8c8;border-right:1px solid #c8c8c8"></div>
<div class="t" style="left:309.5px;top:863.1px;font-size:15px;font-family:'Liberation Sans',sans-serif;font-weight:bold;">Y</div>
<div class="a" style="left:278px;top:886.4px;width:73px;height:28.700000000000045px;background:#f0f0f0;border-right:1.5px solid #6a6a6a;border-bottom:1.5px solid #6a6a6a;border-top:1px solid #fff"></div>
<div class="a" style="left:351px;top:886.4px;width:92.5px;height:28.700000000000045px;background:#fff;border-bottom:1.5px solid #c8c8c8;border-right:1px solid #c8c8c8"></div>
<div class="t" style="left:310.3px;top:891.9px;font-size:15px;font-family:'Liberation Sans',sans-serif;font-weight:bold;">x</div>
<div class="a" style="left:278px;top:915.1px;width:73px;height:28.799999999999955px;background:#f0f0f0;border-right:1.5px solid #6a6a6a;border-bottom:1.5px solid #6a6a6a;border-top:1px solid #fff"></div>
<div class="a" style="left:351px;top:915.1px;width:92.5px;height:28.799999999999955px;background:#fff;border-bottom:1.5px solid #c8c8c8;border-right:1px solid #c8c8c8"></div>
<div class="t" style="left:310.3px;top:920.6px;font-size:15px;font-family:'Liberation Sans',sans-serif;font-weight:bold;">y</div>
<div class="a" style="left:278px;top:943.9px;width:73px;height:28.800000000000068px;background:#f0f0f0;border-right:1.5px solid #6a6a6a;border-bottom:1.5px solid #6a6a6a;border-top:1px solid #fff"></div>
<div class="a" style="left:351px;top:943.9px;width:92.5px;height:28.800000000000068px;background:#fff;border-bottom:1.5px solid #c8c8c8;border-right:1px solid #c8c8c8"></div>
<div class="t" style="left:310.8px;top:949.4px;font-size:15px;font-family:'Liberation Sans',sans-serif;font-weight:bold;">z</div>
<div class="a" style="left:278px;top:972.7px;width:73px;height:28.799999999999955px;background:#f0f0f0;border-right:1.5px solid #6a6a6a;border-bottom:1.5px solid #6a6a6a;border-top:1px solid #fff"></div>
<div class="a" style="left:351px;top:972.7px;width:92.5px;height:28.799999999999955px;background:#e0e0e0;border-bottom:1.5px solid #c8c8c8;border-right:1px solid #c8c8c8"></div>
<div class="t" style="left:309.9px;top:978.2px;font-size:15px;font-family:'Liberation Sans',sans-serif;font-weight:bold;">L</div>
<div class="a" style="left:278px;top:1001.5px;width:73px;height:28.799999999999955px;background:#f0f0f0;border-right:1.5px solid #6a6a6a;border-bottom:1.5px solid #6a6a6a;border-top:1px solid #fff"></div>
<div class="a" style="left:351px;top:1001.5px;width:92.5px;height:28.799999999999955px;background:#e0e0e0;border-bottom:1.5px solid #c8c8c8;border-right:1px solid #c8c8c8"></div>
<div class="t" style="left:310.3px;top:1007.0px;font-size:15px;font-family:'Liberation Sans',sans-serif;font-weight:bold;">a</div>
<div class="a" style="left:278px;top:1030.3px;width:73px;height:28.700000000000045px;background:#f0f0f0;border-right:1.5px solid #6a6a6a;border-bottom:1.5px solid #6a6a6a;border-top:1px solid #fff"></div>
<div class="a" style="left:351px;top:1030.3px;width:92.5px;height:28.700000000000045px;background:#e0e0e0;border-bottom:1.5px solid #c8c8c8;border-right:1px solid #c8c8c8"></div>
<div class="t" style="left:309.9px;top:1035.8px;font-size:15px;font-family:'Liberation Sans',sans-serif;font-weight:bold;">b</div>
<div class="a" style="left:278px;top:1059.0px;width:73px;height:28.799999999999955px;background:#f0f0f0;border-right:1.5px solid #6a6a6a;border-bottom:1.5px solid #6a6a6a;border-top:1px solid #fff"></div>
<div class="a" style="left:351px;top:1059.0px;width:92.5px;height:28.799999999999955px;background:#fff;border-bottom:1.5px solid #c8c8c8;border-right:1px solid #c8c8c8"></div>
<div class="t" style="left:309.9px;top:1064.5px;font-size:15px;font-family:'Liberation Sans',sans-serif;font-weight:bold;">L</div>
<div class="a" style="left:278px;top:1087.8px;width:73px;height:28.799999999999955px;background:#f0f0f0;border-right:1.5px solid #6a6a6a;border-bottom:1.5px solid #6a6a6a;border-top:1px solid #fff"></div>
<div class="a" style="left:351px;top:1087.8px;width:92.5px;height:28.799999999999955px;background:#fff;border-bottom:1.5px solid #c8c8c8;border-right:1px solid #c8c8c8"></div>
<div class="t" style="left:309.1px;top:1093.3px;font-size:15px;font-family:'Liberation Sans',sans-serif;font-weight:bold;">C</div>
<div class="a" style="left:278px;top:1116.6px;width:73px;height:28.800000000000182px;background:#f0f0f0;border-right:1.5px solid #6a6a6a;border-bottom:1.5px solid #6a6a6a;border-top:1px solid #fff"></div>
<div class="a" style="left:351px;top:1116.6px;width:92.5px;height:28.800000000000182px;background:#fff;border-bottom:1.5px solid #c8c8c8;border-right:1px solid #c8c8c8"></div>
<div class="t" style="left:309.1px;top:1122.1px;font-size:15px;font-family:'Liberation Sans',sans-serif;font-weight:bold;">H</div>
<div class="a" style="left:278px;top:1145.4px;width:73px;height:28.799999999999955px;background:#f0f0f0;border-right:1.5px solid #6a6a6a;border-bottom:1.5px solid #6a6a6a;border-top:1px solid #fff"></div>
<div class="a" style="left:351px;top:1145.4px;width:92.5px;height:28.799999999999955px;background:#e0e0e0;border-bottom:1.5px solid #c8c8c8;border-right:1px solid #c8c8c8"></div>
<div class="t" style="left:309.9px;top:1150.9px;font-size:15px;font-family:'Liberation Sans',sans-serif;font-weight:bold;">L</div>
<div class="a" style="left:278px;top:1174.2px;width:73px;height:28.700000000000045px;background:#f0f0f0;border-right:1.5px solid #6a6a6a;border-bottom:1.5px solid #6a6a6a;border-top:1px solid #fff"></div>
<div class="a" style="left:351px;top:1174.2px;width:92.5px;height:28.700000000000045px;background:#e0e0e0;border-bottom:1.5px solid #c8c8c8;border-right:1px solid #c8c8c8"></div>
<div class="t" style="left:308.3px;top:1179.7px;font-size:15px;font-family:'Liberation Sans',sans-serif;font-weight:bold;">M</div>
<div class="a" style="left:278px;top:1202.9px;width:73px;height:28.799999999999955px;background:#f0f0f0;border-right:1.5px solid #6a6a6a;border-bottom:1.5px solid #6a6a6a;border-top:1px solid #fff"></div>
<div class="a" style="left:351px;top:1202.9px;width:92.5px;height:28.799999999999955px;background:#e0e0e0;border-bottom:1.5px solid #c8c8c8;border-right:1px solid #c8c8c8"></div>
<div class="t" style="left:309.5px;top:1208.4px;font-size:15px;font-family:'Liberation Sans',sans-serif;font-weight:bold;">S</div>
<div class="a" style="left:278px;top:1231.7px;width:165.5px;height:106.29999999999995px;background:#a0a0a0"></div>
<div class="a" style="left:443.5px;top:541px;width:1px;height:797px;background:#e4e4e4"></div>
<svg class="a" style="left:449px;top:547px" width="11" height="8"><path d="M0 7.5L5.5 0.5L11 7.5Z" fill="#a9a9a9"/></svg>
<svg class="a" style="left:449px;top:1323px" width="11" height="8"><path d="M0 0.5L5.5 7.5L11 0.5Z" fill="#a9a9a9"/></svg>
<!-- sec_charts -->
<div class="gb" style="left:489px;top:483.5px;width:2040px;height:863.5px;background:#ececec"><div class="cn"></div><div class="hd" style="height:22px"><span>Information</span></div></div>
<div class="a" style="left:495px;top:512px;width:377px;height:27px;background:#fff;border:2px solid #8a8a8a;border-right-color:#dcdcdc;border-bottom-color:#dcdcdc;box-shadow:inset 1.5px 1.5px 0 #6a6a6a"></div>
<div class="a" style="left:849px;top:515px;width:21px;height:22px;background:#f0f0f0;border:1px solid #fff;border-right:2px solid #707070;border-bottom:2px solid #707070"></div>
<svg class="a" style="left:853px;top:523px" width="11" height="7"><path d="M0.5 0.5H10.5L5.5 6Z" fill="#000"/></svg>
<div class="t" style="left:501.0px;top:521px;font-size:15.5px;font-family:'DejaVu Sans',sans-serif;transform:scaleX(1.0087);transform-origin:0 0;">NearBlack - NearWhite</div>
<div class="a" style="left:497.5px;top:549px;width:1015.5px;height:790.5px;background:#fbfbfb;border-top:2px solid #808080;border-left:2px solid #8c8c8c"></div>
<div class="a" style="left:499.5px;top:551px;width:1008px;height:783px;border-top:2px solid #a8a8a8;border-left:2px solid #a8a8a8"></div>
<svg class="a" style="left:502px;top:553px" width="1005" height="781" viewBox="502 553 1005 781"><defs><linearGradient id="cbg" x1="0" y1="0" x2="1" y2="0"><stop offset="0" stop-color="#1e1e1e"/><stop offset="1" stop-color="#080808"/></linearGradient></defs><rect x="502" y="553" width="1005" height="781" fill="url(#cbg)"/></svg>
<div class="t" style="left:877.5px;top:561px;font-size:14px;font-family:'Liberation Sans',sans-serif;font-weight:bold;transform:scaleX(1.0182);transform-origin:0 0;color:#dede00">Near Black Luminance Response</div>
<div class="t" style="left:505.0px;top:604.5px;font-size:24px;font-family:'Liberation Serif',serif;transform:scaleX(1.0647);transform-origin:0 0;color:#d4d4d4">0.9 cd m-2</div>
<div class="t" style="left:505.0px;top:682.5px;font-size:24px;font-family:'Liberation Serif',serif;transform:scaleX(1.0647);transform-origin:0 0;color:#d4d4d4">0.8 cd m-2</div>
<div class="t" style="left:505.0px;top:760.5px;font-size:24px;font-family:'Liberation Serif',serif;transform:scaleX(1.0647);transform-origin:0 0;color:#d4d4d4">0.7 cd m-2</div>
<div class="t" style="left:505.0px;top:838.5px;font-size:24px;font-family:'Liberation Serif',serif;transform:scaleX(1.0647);transform-origin:0 0;color:#d4d4d4">0.6 cd m-2</div>
<div class="t" style="left:505.0px;top:916.5px;font-size:24px;font-family:'Liberation Serif',serif;transform:scaleX(1.0647);transform-origin:0 0;color:#d4d4d4">0.5 cd m-2</div>
<div class="t" style="left:505.0px;top:994.5px;font-size:24px;font-family:'Liberation Serif',serif;transform:scaleX(1.0647);transform-origin:0 0;color:#d4d4d4">0.4 cd m-2</div>
<div class="t" style="left:505.0px;top:1072.5px;font-size:24px;font-family:'Liberation Serif',serif;transform:scaleX(1.0647);transform-origin:0 0;color:#d4d4d4">0.3 cd m-2</div>
<div class="t" style="left:505.0px;top:1150.5px;font-size:24px;font-family:'Liberation Serif',serif;transform:scaleX(1.0647);transform-origin:0 0;color:#d4d4d4">0.2 cd m-2</div>
<div class="t" style="left:505.0px;top:1228.5px;font-size:24px;font-family:'Liberation Serif',serif;transform:scaleX(1.0647);transform-origin:0 0;color:#d4d4d4">0.1 cd m-2</div>
<div class="t" style="left:757.0px;top:1307px;font-size:24px;font-family:'Liberation Serif',serif;transform:scaleX(1.0603);transform-origin:0 0;color:#e6e6e6">1% White</div>
<div class="t" style="left:1008.0px;top:1307px;font-size:24px;font-family:'Liberation Serif',serif;transform:scaleX(1.0603);transform-origin:0 0;color:#e6e6e6">2% White</div>
<div class="t" style="left:1259.0px;top:1307px;font-size:24px;font-family:'Liberation Serif',serif;transform:scaleX(1.0603);transform-origin:0 0;color:#e6e6e6">3% White</div>
<div class="t" style="left:1301.0px;top:1265px;font-size:20px;font-family:'Liberation Sans',sans-serif;font-weight:bold;transform:scaleX(1.0136);transform-origin:0 0;color:#4e4e4e">hcfr.sourceforge.net</div>
<svg class="a" style="left:502px;top:553px" width="1005" height="781" viewBox="502 553 1005 781"><path d="M754.5 553V1334M1005.5 553V1334M1256.5 553V1334M502 632.5H1507M502 710.5H1507M502 788.5H1507M502 866.5H1507M502 944.5H1507M502 1022.5H1507M502 1100.5H1507M502 1178.5H1507M502 1256.5H1507" stroke="#0b4545" stroke-width="1" fill="none"/><path d="M502.5 553V1334" stroke="#0c4242" stroke-width="2" fill="none"/><path d="M505 1317 L731 1316 L961 1311 L1189 1300 L1420 1283" stroke="#e8e8e8" stroke-width="1" stroke-dasharray="3 3" fill="none"/><path d="M505 1318.3 L731 1320.5 L961 1312.5 L1189 1301 L1420 1285" stroke="#ffff00" stroke-width="2.2" fill="none"/><rect x="726" y="1315.5" width="10" height="10" fill="#ffff00"/><rect x="956" y="1307.5" width="10" height="10" fill="#ffff00"/><rect x="1184" y="1296" width="10" height="10" fill="#ffff00"/><rect x="1415" y="1280" width="10" height="10" fill="#ffff00"/><rect x="726" y="1311" width="10" height="10" fill="#e4e4e4"/><rect x="956" y="1306" width="10" height="10" fill="#e4e4e4"/><rect x="1184" y="1295" width="10" height="10" fill="#e4e4e4"/><rect x="1415" y="1278" width="10" height="10" fill="#e4e4e4"/><rect x="502" y="1312" width="6" height="10" fill="#e4e4e4"/></svg>
<div class="a" style="left:1513px;top:549px;width:1015.6px;height:790.5px;background:#fbfbfb;border-top:2.5px solid #8c8c8c;border-left:2px solid #808080"></div>
<div class="a" style="left:1515px;top:551.5px;width:1008px;height:783px;border-top:2.5px solid #6c6c6c;border-left:2px solid #a8a8a8"></div>
<svg class="a" style="left:1517px;top:554px" width="1006" height="780" viewBox="1517 554 1006 780"><defs><linearGradient id="wbg" x1="0" y1="0" x2="1" y2="0"><stop offset="0" stop-color="#828282"/><stop offset="1" stop-color="#ffffff"/></linearGradient></defs><rect x="1517" y="554" width="1006" height="780" fill="url(#wbg)"/></svg>
<div class="t" style="left:1892.5px;top:561px;font-size:14px;font-family:'Liberation Sans',sans-serif;font-weight:bold;transform:scaleX(1.0238);transform-origin:0 0;color:#6b2a6e">Near White Luminance Response</div>
<div class="t" style="left:1521.0px;top:578.0px;font-size:24px;font-family:'Liberation Serif',serif;transform:scaleX(1.0612);transform-origin:0 0;color:#cacaca">121 cd m-2</div>
<div class="t" style="left:1521.0px;top:682.2px;font-size:24px;font-family:'Liberation Serif',serif;transform:scaleX(1.0699);transform-origin:0 0;color:#cacaca">119 cd m-2</div>
<div class="t" style="left:1521.0px;top:786.5px;font-size:24px;font-family:'Liberation Serif',serif;transform:scaleX(1.0699);transform-origin:0 0;color:#cacaca">117 cd m-2</div>
<div class="t" style="left:1521.0px;top:890.8px;font-size:24px;font-family:'Liberation Serif',serif;transform:scaleX(1.0699);transform-origin:0 0;color:#cacaca">115 cd m-2</div>
<div class="t" style="left:1521.0px;top:995.0px;font-size:24px;font-family:'Liberation Serif',serif;transform:scaleX(1.0699);transform-origin:0 0;color:#cacaca">113 cd m-2</div>
<div class="t" style="left:1521.0px;top:1099.2px;font-size:24px;font-family:'Liberation Serif',serif;transform:scaleX(1.0788);transform-origin:0 0;color:#cacaca">111 cd m-2</div>
<div class="t" style="left:1521.0px;top:1203.5px;font-size:24px;font-family:'Liberation Serif',serif;transform:scaleX(1.0612);transform-origin:0 0;color:#cacaca">109 cd m-2</div>
<div class="t" style="left:1688.0px;top:1307px;font-size:24px;font-family:'Liberation Serif',serif;transform:scaleX(1.0629);transform-origin:0 0;color:#1c1c1c">95% White</div>
<div class="t" style="left:1855.7px;top:1307px;font-size:24px;font-family:'Liberation Serif',serif;transform:scaleX(1.0629);transform-origin:0 0;color:#1c1c1c">96% White</div>
<div class="t" style="left:2023.4px;top:1307px;font-size:24px;font-family:'Liberation Serif',serif;transform:scaleX(1.0629);transform-origin:0 0;color:#1c1c1c">97% White</div>
<div class="t" style="left:2191.1px;top:1307px;font-size:24px;font-family:'Liberation Serif',serif;transform:scaleX(1.0629);transform-origin:0 0;color:#1c1c1c">98% White</div>
<div class="t" style="left:2358.8px;top:1307px;font-size:24px;font-family:'Liberation Serif',serif;transform:scaleX(1.0629);transform-origin:0 0;color:#1c1c1c">99% White</div>
<div class="t" style="left:2315.0px;top:1265px;font-size:20px;font-family:'Liberation Sans',sans-serif;font-weight:bold;transform:scaleX(1.0136);transform-origin:0 0;color:#a2a2a2">hcfr.sourceforge.net</div>
<svg class="a" style="left:1517px;top:554px" width="1006" height="780" viewBox="1517 554 1006 780"><path d="M1685.5 554V1334M1853.2 554V1334M2020.9 554V1334M2188.6 554V1334M2356.3 554V1334M1517 605.5H2523M1517 709.8H2523M1517 814.0H2523M1517 918.2H2523M1517 1022.5H2523M1517 1126.8H2523M1517 1231.0H2523M1518 554V1334" stroke="#1e5858" stroke-width="1.4" fill="none"/><path d="M1833 1252 L1986 1056 L2140 922 L2292 789 L2522 583" stroke="#f4f4f4" stroke-width="1" stroke-dasharray="4 3" fill="none"/><path d="M1833 1103 L1986 995 L2140 864 L2292 733 L2522 565" stroke="#ffff00" stroke-width="2.4" fill="none"/><rect x="1828" y="1247" width="10" height="10" fill="#e6e6e6"/><rect x="1981" y="1051" width="10" height="10" fill="#e6e6e6"/><rect x="2135" y="917" width="10" height="10" fill="#e6e6e6"/><rect x="2287" y="784" width="10" height="10" fill="#e6e6e6"/><rect x="2517" y="578" width="10" height="10" fill="#e6e6e6"/><rect x="1828" y="1098" width="10" height="10" fill="#ffff00"/><rect x="1981" y="990" width="10" height="10" fill="#ffff00"/><rect x="2135" y="859" width="10" height="10" fill="#ffff00"/><rect x="2287" y="728" width="10" height="10" fill="#ffff00"/><rect x="2517" y="560" width="10" height="10" fill="#ffff00"/></svg>
<!-- sec_bottom -->
<div class="a" style="left:3px;top:1347px;width:2528px;height:2.7px;background:#fbfbfb"></div>
<div class="a" style="left:2px;top:1349.7px;width:2534px;height:2.3px;background:#808080"></div>
<div class="a" style="left:2px;top:1352px;width:2534px;height:3.6px;background:#bcbcbc"></div>
<div class="a" style="left:0px;top:1378px;width:2560px;height:2.5px;background:#fcfcfc"></div>
<div class="a" style="left:23px;top:1366px;width:2438px;height:2px;background:#8c8c8c"></div>
<div class="a" style="left:0px;top:1380.3px;width:2560px;height:1.8px;background:#111"></div>
<div class="a" style="left:0px;top:1382px;width:2560px;height:35px;background:#f0f0f0"></div>
<div class="a" style="left:1px;top:1382px;width:34px;height:34px;background:#f0f0f0;border-top:1px solid #fff;border-left:1px solid #fff;border-right:2px solid #6a6a6a;border-bottom:2px solid #6a6a6a"></div>
<div class="a" style="left:35px;top:1382px;width:34px;height:34px;background:#f0f0f0;border-top:1px solid #fff;border-left:1px solid #fff;border-right:2px solid #6a6a6a;border-bottom:2px solid #6a6a6a"></div>
<div class="a" style="left:69px;top:1382px;width:34px;height:34px;background:#f0f0f0;border-top:1px solid #fff;border-left:1px solid #fff;border-right:2px solid #6a6a6a;border-bottom:2px solid #6a6a6a"></div>
<div class="a" style="left:0px;top:1414px;width:105px;height:2px;background:#1a1a1a"></div>
<div class="a" style="left:103px;top:1382px;width:2px;height:34px;background:#1a1a1a"></div>
<svg class="a" style="left:0;top:1382px" width="105" height="34" viewBox="0 0 105 34"><path d="M14 12L24 22M24 12L14 22" stroke="#000" stroke-width="1.6"/><path d="M54 13L49.5 17L54 21Z" fill="#000"/><path d="M84 13L88.5 17L84 21Z" fill="#000"/></svg>
<svg class="a" style="left:100px;top:1378px" width="760" height="41" viewBox="100 1378 760 41"><path d="M106 1379L123 1417H260L276 1379Z" fill="#fff"/><path d="M106 1381L122.5 1416M260 1416L275.5 1381" stroke="#000" stroke-width="1.3" fill="none"/><path d="M267 1402L274 1415.7H428.5L435 1401" stroke="#000" stroke-width="1.3" fill="none"/><path d="M427 1381L443 1415.7H558.5L565 1401" stroke="#000" stroke-width="1.3" fill="none"/><path d="M556 1381L572 1415.7H821L836.5 1381" stroke="#000" stroke-width="1.3" fill="none"/></svg>
<div class="t" style="left:126.5px;top:1385px;font-size:27.5px;font-family:'Liberation Sans',sans-serif;font-weight:bold;transform:scaleX(1.0325);transform-origin:0 0;">Measures</div>
<div class="t" style="left:283.0px;top:1385px;font-size:27.5px;font-family:'Liberation Sans',sans-serif;transform:scaleX(1.0183);transform-origin:0 0;">Luminance</div>
<div class="t" style="left:449.0px;top:1385px;font-size:27.5px;font-family:'Liberation Sans',sans-serif;transform:scaleX(1.0226);transform-origin:0 0;">Gamma</div>
<div class="t" style="left:585.0px;top:1385px;font-size:27.5px;font-family:'Liberation Sans',sans-serif;">Color temperature</div>
<svg class="a" style="left:2348px;top:1383px" width="20" height="18" viewBox="0 0 20 18"><path d="M1 1H18V12H15V17H11V12H8V17H3L1 12Z" fill="#8a8400" stroke="#111" stroke-width="1.2"/><rect x="6" y="3" width="8" height="6" fill="#e8282a"/><path d="M4 7C4 4 7 3 10 4" stroke="#fff" stroke-width="1.2" fill="none"/><rect x="11" y="11" width="6" height="5" fill="#f4e800"/></svg>
<div class="a" style="left:2468px;top:1384px;width:15px;height:15px;background:#fff;border:1.5px solid #7a7a7a;border-right-color:#e4e4e4;border-bottom-color:#e4e4e4"></div>
<div class="t" style="left:2490.0px;top:1384px;font-size:15px;font-family:'Liberation Sans',sans-serif;transform:scaleX(0.9248);transform-origin:0 0;">Reference</div>
<div class="a" style="left:0px;top:1417px;width:2560px;height:23px;background:linear-gradient(90deg,#e4eaf6 0,#e8edf8 100px,#edf1f9 400px,#edf1f9 1929px,#e3e9f5 1929px,#e9eef8 2560px)"></div>
<div class="t" style="left:3.0px;top:1422.5px;font-size:15.5px;font-family:'Liberation Sans',sans-serif;transform:scaleX(0.8928);transform-origin:0 0;color:#222">Ready</div>
<div class="a" style="left:2338px;top:1418px;width:93px;height:24px;border:1px solid #aebfda;background:#edf1f9"></div>
<div class="a" style="left:2435px;top:1418px;width:35px;height:24px;border:1px solid #aebfda;background:#edf1f9"></div>
<div class="a" style="left:2474px;top:1418px;width:41px;height:24px;border:1px solid #aebfda;background:#edf1f9"></div>
<div class="a" style="left:2519px;top:1418px;width:43px;height:24px;border:1px solid #aebfda;background:#edf1f9"></div>
<div class="t" style="left:2478.0px;top:1422px;font-size:15.5px;font-family:'Liberation Sans',sans-serif;transform:scaleX(0.9349);transform-origin:0 0;color:#111">NUM</div>
<div class="a" style="left:0px;top:1437.5px;width:2560px;height:2.5px;background:#2a2a2a"></div>
</body></html>
